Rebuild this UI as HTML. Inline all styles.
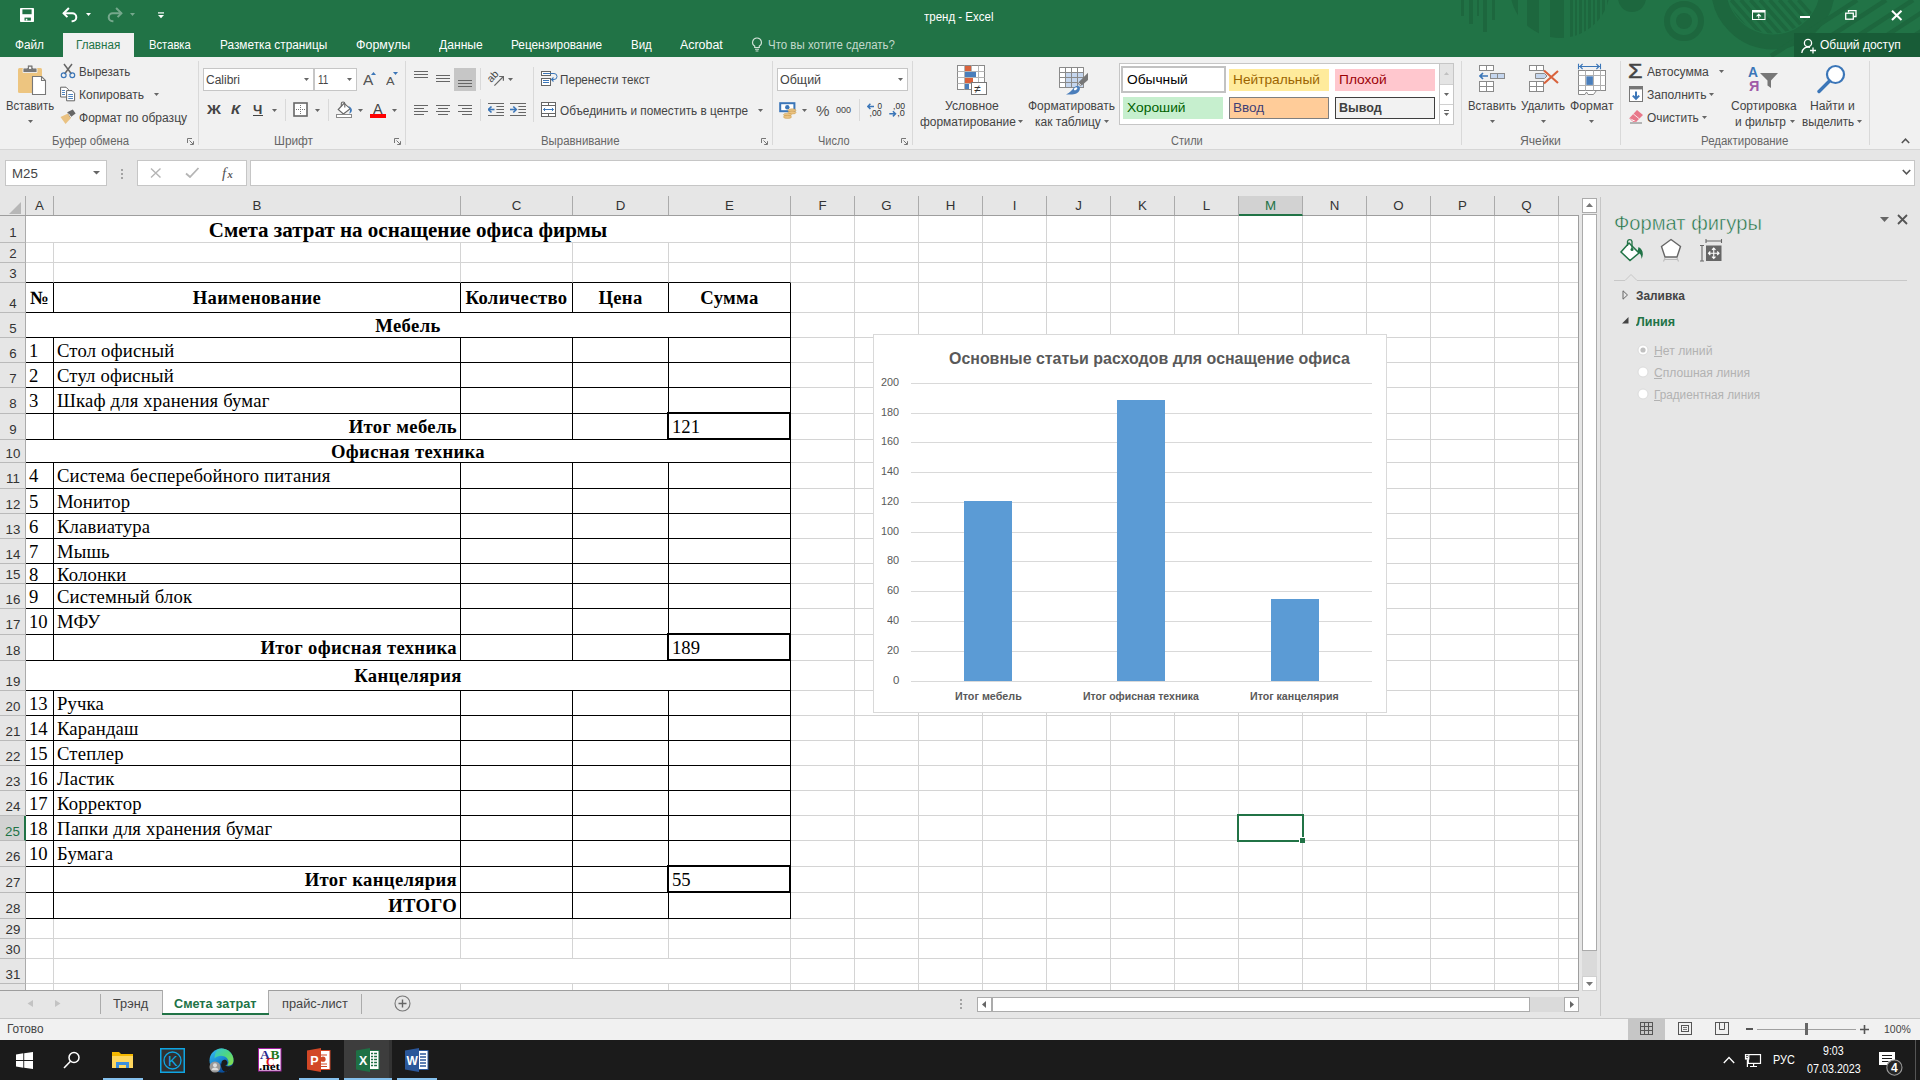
<!DOCTYPE html>
<html lang="ru">
<head>
<meta charset="utf-8">
<title>тренд - Excel</title>
<style>
*{box-sizing:border-box;margin:0;padding:0}
html,body{width:1920px;height:1080px;overflow:hidden;background:#e6e6e6}
body{font-family:"Liberation Sans",sans-serif;font-size:12px;color:#444;position:relative;-webkit-font-smoothing:antialiased}
.abs{position:absolute}
.t{position:absolute;white-space:nowrap;line-height:1}
/* title bar */
#titlebar{position:absolute;left:0;top:0;width:1920px;height:57px;background:#217346;overflow:hidden}
#ribbon{position:absolute;left:0;top:57px;width:1920px;height:93px;background:#f1f1f1;border-bottom:1px solid #d2d2d2}
#fbar{position:absolute;left:0;top:150px;width:1920px;height:47px;background:#e6e6e6}
#grid{position:absolute;left:0;top:196px;width:1579px;height:795px;background:#fff;overflow:hidden}
#pane{position:absolute;left:1600px;top:197px;width:320px;height:821px;background:#e6e6e6}
#tabs{position:absolute;left:0;top:990px;width:1600px;height:28px;background:#e6e6e6}
#status{position:absolute;left:0;top:1018px;width:1920px;height:22px;background:#f1f1f1;border-top:1px solid #d2d2d2}
#taskbar{position:absolute;left:0;top:1040px;width:1920px;height:40px;background:#1b1b1b}
/* grid */
.c{position:absolute;border-right:1px solid #d4d4d4;border-bottom:1px solid #d4d4d4;background:#fff;font-family:"Liberation Serif",serif;font-size:18.67px;color:#000;white-space:nowrap;overflow:visible}
.c span{position:absolute;bottom:1px;line-height:21px}
.ch{position:absolute;top:0;height:19px;background:#e6e6e6;border-right:1px solid #ababab;text-align:center;font-size:13.3px;line-height:20px;color:#333}
.rh{position:absolute;left:0;width:26px;background:#e6e6e6;border-bottom:1px solid #bababa;border-right:1px solid #ababab;text-align:center;font-size:13.3px;color:#333}
.rh span{position:absolute;left:1px;right:0;bottom:0;line-height:17px}
.bl{position:absolute;background:#000}
</style>
</head>
<body>
<div id="titlebar">
<svg class="abs" style="left:1440px;top:0" width="480" height="57" viewBox="0 0 480 57">
<g fill="#1d673e">
<rect x="21" y="0" width="3" height="16"/><rect x="29" y="0" width="4" height="24"/><rect x="37" y="0" width="2" height="16"/><rect x="43" y="0" width="4" height="32"/><rect x="52" y="0" width="3" height="20"/>
<clipPath id="hc"><circle cx="120" cy="-12" r="50"/></clipPath>
<g clip-path="url(#hc)">
<rect x="68" y="0" width="10" height="40"/><rect x="87" y="0" width="12" height="40"/><rect x="110" y="0" width="14" height="40"/>
<rect x="130" y="0" width="3" height="40"/><rect x="135" y="0" width="2" height="40"/><rect x="139" y="0" width="3" height="40"/><rect x="144" y="0" width="2" height="40"/><rect x="148" y="0" width="3" height="40"/><rect x="153" y="0" width="2" height="40"/><rect x="157" y="0" width="3" height="40"/><rect x="162" y="0" width="3" height="40"/><rect x="167" y="0" width="3" height="40"/>
</g>
<circle cx="192" cy="-2" r="14"/>
<circle cx="244" cy="21" r="8"/>
</g>
<circle cx="244" cy="21" r="17" fill="none" stroke="#1d673e" stroke-width="6"/>
<circle cx="333" cy="-12.6" r="54.5" fill="none" stroke="#1d673e" stroke-width="15"/>
<clipPath id="rc"><circle cx="333" cy="-12.6" r="46"/></clipPath>
<g stroke="#1d673e" stroke-width="3.7" fill="none">
<g clip-path="url(#rc)"><line x1="262.5" y1="0" x2="320.5" y2="66"/><line x1="272.1" y1="0" x2="330.1" y2="66"/><line x1="281.7" y1="0" x2="339.7" y2="66"/><line x1="291.3" y1="0" x2="349.3" y2="66"/><line x1="300.9" y1="0" x2="358.9" y2="66"/><line x1="310.5" y1="0" x2="368.5" y2="66"/><line x1="320.1" y1="0" x2="378.1" y2="66"/><line x1="329.7" y1="0" x2="387.7" y2="66"/><line x1="339.3" y1="0" x2="397.3" y2="66"/><line x1="348.9" y1="0" x2="406.9" y2="66"/><line x1="358.5" y1="0" x2="416.5" y2="66"/></g>
<g stroke-width="4.5"><line x1="417" y1="0" x2="331" y2="56"/><line x1="446" y1="0" x2="360" y2="56"/><line x1="473" y1="0" x2="387" y2="56"/><line x1="501" y1="0" x2="415" y2="56"/><line x1="529" y1="0" x2="443" y2="56"/></g>
</g>
</svg>
<div class="abs" style="left:1794.00px;top:33.00px;width:126.00px;height:24.00px;background:#185c37;"></div>
<svg class="abs" style="left:20.00px;top:8.00px" width="14" height="14" viewBox="0 0 14 14"><rect x="0" y="0" width="14" height="14" rx=".8" fill="#fff"/><rect x="2.4" y="1.4" width="9.2" height="4.8" fill="#217346"/><rect x="4.5" y="9.6" width="6.4" height="3" fill="#217346"/><rect x="5.8" y="10.8" width="1.5" height="1.8" fill="#fff"/></svg>
<svg class="abs" style="left:62.00px;top:7.00px" width="17" height="16" viewBox="0 0 17 16"><path d="M1.6,6.3 H10.3 A4,4 0 0 1 10.3,14.3 H9.6" fill="none" stroke="#fff" stroke-width="2"/><path d="M6.9,1 L1.6,6.3 L5.4,10.1" fill="none" stroke="#fff" stroke-width="2"/></svg>
<svg class="abs" style="left:86.00px;top:13.00px" width="5" height="3" viewBox="0 0 5 3"><polygon points="0,0 5,0 2.5,3" fill="#fff"/></svg>
<svg class="abs" style="left:106.00px;top:7.00px" width="17" height="16" viewBox="0 0 17 16"><g opacity=".38"><path d="M15.4,6.3 H6.7 A4,4 0 0 0 6.7,14.3 H7.4" fill="none" stroke="#fff" stroke-width="2"/><path d="M10.1,1 L15.4,6.3 L11.6,10.1" fill="none" stroke="#fff" stroke-width="2"/></g></svg>
<svg class="abs" style="left:130.00px;top:13.00px" width="5" height="3" viewBox="0 0 5 3"><polygon points="0,0 5,0 2.5,3" fill="#fff" opacity=".38"/></svg>
<svg class="abs" style="left:157.50px;top:12.00px" width="6" height="7" viewBox="0 0 6 7"><rect x="0" y=".3" width="6" height="1.2" fill="#fff"/><polygon points="0,3 6,3 3,6.2" fill="#fff"/></svg>
<span class="t" style="left:923.90px;top:11px;font-size:12.30px;color:#fff;transform-origin:0 0;transform:scaleX(0.9355);">тренд - Excel</span>
<svg class="abs" style="left:1752.00px;top:10.00px" width="14" height="10" viewBox="0 0 14 10"><rect x=".5" y=".5" width="12.5" height="9" fill="none" stroke="#fff"/><rect x=".5" y=".5" width="12.5" height="2" fill="#fff"/><path d="M6.75,8.5 V4.5 M4.6,6.3 L6.75,4.2 L8.9,6.3" stroke="#fff" fill="none" stroke-width="1.1"/></svg>
<div class="abs" style="left:1800.00px;top:16.00px;width:10.00px;height:2.00px;background:#fff;"></div>
<svg class="abs" style="left:1845.00px;top:10.00px" width="12" height="10" viewBox="0 0 12 10"><path d="M3.5,2.5 V.5 H11 V6.5 H8.5" fill="none" stroke="#fff" stroke-width="1.3"/><rect x=".7" y="3.2" width="7.6" height="6" fill="none" stroke="#fff" stroke-width="1.3"/></svg>
<svg class="abs" style="left:1891.00px;top:10.00px" width="12" height="11" viewBox="0 0 12 11"><path d="M1,.8 L10.5,10 M10.5,.8 L1,10" stroke="#fff" stroke-width="2"/></svg>
<div class="abs" style="left:63.00px;top:33.00px;width:71.00px;height:24.00px;background:#f1f1f1;"></div>
<span class="t" style="left:15.10px;top:39px;font-size:12.30px;color:#fff;transform-origin:0 0;transform:scaleX(0.9590);">Файл</span>
<span class="t" style="left:75.90px;top:39px;font-size:12.30px;color:#217346;transform-origin:0 0;transform:scaleX(0.9441);">Главная</span>
<span class="t" style="left:149.10px;top:39px;font-size:12.30px;color:#fff;transform-origin:0 0;transform:scaleX(0.9143);">Вставка</span>
<span class="t" style="left:219.90px;top:39px;font-size:12.30px;color:#fff;transform-origin:0 0;transform:scaleX(0.9607);">Разметка страницы</span>
<span class="t" style="left:355.90px;top:39px;font-size:12.30px;color:#fff;transform-origin:0 0;transform:scaleX(1.0126);">Формулы</span>
<span class="t" style="left:438.80px;top:39px;font-size:12.30px;color:#fff;transform-origin:0 0;transform:scaleX(0.9856);">Данные</span>
<span class="t" style="left:511.30px;top:39px;font-size:12.30px;color:#fff;transform-origin:0 0;transform:scaleX(0.9592);">Рецензирование</span>
<span class="t" style="left:630.90px;top:39px;font-size:12.30px;color:#fff;transform-origin:0 0;transform:scaleX(0.9347);">Вид</span>
<span class="t" style="left:679.60px;top:39px;font-size:12.30px;color:#fff;transform-origin:0 0;transform:scaleX(1.0097);">Acrobat</span>
<svg class="abs" style="left:751.00px;top:37.00px" width="12" height="15" viewBox="0 0 12 15"><path d="M6,1 A4.3,4.3 0 0 1 8.3,9 V10.5 H3.7 V9 A4.3,4.3 0 0 1 6,1 Z" fill="none" stroke="#cfe1d6" stroke-width="1.2"/><path d="M4,12.3 H8 M4.6,14 H7.4" stroke="#cfe1d6" stroke-width="1.1"/></svg>
<span class="t" style="left:768.40px;top:39px;font-size:12.30px;color:#c3dacc;transform-origin:0 0;transform:scaleX(0.9340);">Что вы хотите сделать?</span>
<svg class="abs" style="left:1801.00px;top:38.00px" width="16" height="16" viewBox="0 0 16 16"><circle cx="7" cy="5" r="3.6" fill="none" stroke="#fff" stroke-width="1.3"/><path d="M.8,15 A6.3,6.3 0 0 1 9,9.3" fill="none" stroke="#fff" stroke-width="1.3"/><path d="M12,9.5 V15.5 M9,12.5 H15" stroke="#fff" stroke-width="1.3"/></svg>
<span class="t" style="left:1820.10px;top:39px;font-size:12.30px;color:#fff;transform-origin:0 0;transform:scaleX(0.9777);">Общий доступ</span>
</div>
<div class="abs" style="left:0;top:57px;width:1920px;height:92px;background:#f1f1f1"></div>
<div class="abs" style="left:0;top:149px;width:1920px;height:1px;background:#d6d6d6"></div>
<svg class="abs" style="left:17.00px;top:64.00px" width="30" height="32" viewBox="0 0 30 32"><rect x="1" y="4" width="24" height="25" rx="1.5" fill="#edc580"/><path d="M6,8.5 V5 Q6,4 7,4 H10.3 V2 Q10.3,1 11.3,1 H15 Q16,1 16,2 V4 H19 Q20,4 20,5 V8.5 Z" fill="#777" stroke="#f1f1f1" stroke-width=".9"/><rect x="12" y="2.8" width="2.2" height="2.2" fill="#f1f1f1"/><path d="M15.5,12.5 H24.5 L28.5,16.5 V30.5 H15.5 Z" fill="#fff" stroke="#777" stroke-width="1.1"/><path d="M24.5,12.5 V16.5 H28.5" fill="none" stroke="#777" stroke-width="1.1"/></svg>
<span class="t" style="left:6.10px;top:100px;font-size:12.30px;color:#444;transform-origin:0 0;transform:scaleX(0.9216);">Вставить</span>
<svg class="abs" style="left:28.00px;top:120.00px" width="5" height="3" viewBox="0 0 5 3"><polygon points="0,0 5,0 2.5,3" fill="#666"/></svg>
<svg class="abs" style="left:60.00px;top:63.00px" width="16" height="16" viewBox="0 0 16 16"><path d="M4,1 L11.5,11 M12,1 L4.5,11" stroke="#666" stroke-width="1.5" fill="none"/><circle cx="3.7" cy="12.3" r="2.4" fill="none" stroke="#3b76b8" stroke-width="1.2"/><circle cx="12.3" cy="12.3" r="2.4" fill="none" stroke="#3b76b8" stroke-width="1.2"/></svg>
<span class="t" style="left:79.20px;top:66px;font-size:12.30px;color:#444;transform-origin:0 0;transform:scaleX(0.9358);">Вырезать</span>
<svg class="abs" style="left:60.00px;top:86.00px" width="16" height="16" viewBox="0 0 16 16"><path d="M.6,1.2 H6 L8.5,3.7 V11 H.6 Z" fill="#fff" stroke="#666" stroke-width="1"/><path d="M6.6,4.6 H12 L14.6,7.2 V14.8 H6.6 Z" fill="#fff" stroke="#666" stroke-width="1"/><path d="M2,4.5 H5 M2,6.5 H5 M2,8.5 H5 M8.3,8.5 H13 M8.3,10.5 H13 M8.3,12.5 H13" stroke="#3b76b8" stroke-width=".9"/></svg>
<span class="t" style="left:79.20px;top:89px;font-size:12.30px;color:#444;transform-origin:0 0;transform:scaleX(0.9807);">Копировать</span>
<svg class="abs" style="left:154.00px;top:93.00px" width="5" height="3" viewBox="0 0 5 3"><polygon points="0,0 5,0 2.5,3" fill="#666"/></svg>
<svg class="abs" style="left:60.00px;top:109.00px" width="17" height="16" viewBox="0 0 17 16"><path d="M0.5,8 L8,4.5 L11,9 L5.5,15 Z" fill="#eac282"/><path d="M7.2,3.2 L12.8,0.6 L15.6,4.4 L10.2,8.6 Z" fill="#666"/><path d="M8.5,4.6 L10.8,8" stroke="#f1f1f1" stroke-width="1"/></svg>
<span class="t" style="left:79.20px;top:112px;font-size:12.30px;color:#444;transform-origin:0 0;transform:scaleX(0.9801);">Формат по образцу</span>
<span class="t" style="left:52.10px;top:135px;font-size:12.30px;color:#666;transform-origin:0 0;transform:scaleX(0.9219);">Буфер обмена</span>
<svg class="abs" style="left:187.00px;top:138.00px" width="7" height="7" viewBox="0 0 7 7"><path d="M.5,5 V.5 H5" fill="none" stroke="#777" stroke-width="1"/><path d="M2.5,2.5 L6,6 M6.5,3.2 V6.5 H3.2" fill="none" stroke="#777" stroke-width="1"/></svg>
<div class="abs" style="left:198.00px;top:61.00px;width:1.00px;height:84.00px;background:#d9d9d9;"></div>
<div class="abs" style="left:203.00px;top:68.00px;width:111.00px;height:23.00px;background:#fff;border:1px solid #c6c6c6;"></div>
<div class="abs" style="left:314.00px;top:68.00px;width:43.00px;height:23.00px;background:#fff;border:1px solid #c6c6c6;border-left:1px solid #c6c6c6;"></div>
<span class="t" style="left:206.10px;top:74px;font-size:12.30px;color:#444;transform-origin:0 0;transform:scaleX(0.9768);">Calibri</span>
<svg class="abs" style="left:304.00px;top:78.00px" width="5" height="3" viewBox="0 0 5 3"><polygon points="0,0 5,0 2.5,3" fill="#666"/></svg>
<span class="t" style="left:317.60px;top:74px;font-size:12.30px;color:#444;transform-origin:0 0;transform:scaleX(0.8066);">11</span>
<svg class="abs" style="left:347.00px;top:78.00px" width="5" height="3" viewBox="0 0 5 3"><polygon points="0,0 5,0 2.5,3" fill="#666"/></svg>
<span class="t" style="left:362.60px;top:73px;font-size:14.30px;color:#555;transform-origin:0 0;transform:scaleX(1.0798);">A</span>
<svg class="abs" style="left:370.50px;top:72.00px" width="5" height="3" viewBox="0 0 5 3"><polygon points="0,3 5,3 2.5,0" fill="#3b76b8"/></svg>
<span class="t" style="left:385.60px;top:76px;font-size:11.40px;color:#555;transform-origin:0 0;transform:scaleX(1.1244);">A</span>
<svg class="abs" style="left:393.00px;top:72.00px" width="5" height="3" viewBox="0 0 5 3"><polygon points="0,0 5,0 2.5,3" fill="#3b76b8"/></svg>
<span class="t" style="left:207.10px;top:103px;font-size:13.00px;color:#444;font-weight:bold;transform-origin:0 0;transform:scaleX(1.1830);">Ж</span>
<span class="t" style="left:230.60px;top:103px;font-size:13.00px;color:#444;font-weight:bold;font-style:italic;transform-origin:0 0;transform:scaleX(1.1512);">К</span>
<span class="t" style="left:253.10px;top:103px;font-size:13.00px;color:#444;font-weight:bold;transform-origin:0 0;transform:scaleX(1.0181);">Ч</span>
<div class="abs" style="left:253.00px;top:115.00px;width:10.00px;height:1.20px;background:#444;"></div>
<svg class="abs" style="left:272.00px;top:109.00px" width="5" height="3" viewBox="0 0 5 3"><polygon points="0,0 5,0 2.5,3" fill="#666"/></svg>
<div class="abs" style="left:285.00px;top:99.00px;width:1.00px;height:22.00px;background:#d9d9d9;"></div>
<svg class="abs" style="left:293.00px;top:102.00px" width="15" height="15" viewBox="0 0 15 15"><rect x="1" y="1" width="13" height="13" fill="#fff" stroke="#666" stroke-width="1.6"/><path d="M7.5,3 V12 M3,7.5 H12" stroke="#777" stroke-width="1" stroke-dasharray="1,1"/></svg>
<svg class="abs" style="left:315.00px;top:109.00px" width="5" height="3" viewBox="0 0 5 3"><polygon points="0,0 5,0 2.5,3" fill="#666"/></svg>
<div class="abs" style="left:328.00px;top:99.00px;width:1.00px;height:22.00px;background:#d9d9d9;"></div>
<svg class="abs" style="left:336.00px;top:101.00px" width="17" height="18" viewBox="0 0 17 18"><path d="M8.1,2.3 L14.2,7.7 L7.4,13 L2.2,8.5 Z" fill="#fff" stroke="#666" stroke-width="1.1"/><path d="M5.3,5.3 V2.6 A1.75,1.6 0 0 1 8.8,2.6 V6.6" fill="none" stroke="#666" stroke-width="1.1"/><path d="M12.2,5 C15.2,6 16.6,8.6 15.6,10.6 C15,12 13.7,12.6 13.3,12.3 C13.9,10.8 14.1,9 14.2,7.7 Z" fill="#3b76b8"/><rect x=".5" y="13.5" width="15" height="3" fill="#fff" stroke="#8a8a8a" stroke-width="1"/></svg>
<svg class="abs" style="left:358.00px;top:109.00px" width="5" height="3" viewBox="0 0 5 3"><polygon points="0,0 5,0 2.5,3" fill="#666"/></svg>
<span class="t" style="left:373.35px;top:102px;font-size:14.00px;color:#444;transform-origin:0 0;transform:scaleX(1.0227);">A</span>
<div class="abs" style="left:370.00px;top:114.00px;width:16.00px;height:4.00px;background:#f00;"></div>
<svg class="abs" style="left:392.00px;top:109.00px" width="5" height="3" viewBox="0 0 5 3"><polygon points="0,0 5,0 2.5,3" fill="#666"/></svg>
<span class="t" style="left:274.35px;top:135px;font-size:12.30px;color:#666;transform-origin:0 0;transform:scaleX(0.9650);">Шрифт</span>
<svg class="abs" style="left:394.00px;top:138.00px" width="7" height="7" viewBox="0 0 7 7"><path d="M.5,5 V.5 H5" fill="none" stroke="#777" stroke-width="1"/><path d="M2.5,2.5 L6,6 M6.5,3.2 V6.5 H3.2" fill="none" stroke="#777" stroke-width="1"/></svg>
<div class="abs" style="left:405.00px;top:61.00px;width:1.00px;height:84.00px;background:#d9d9d9;"></div>
<div class="abs" style="left:414.00px;top:71.00px;width:14.00px;height:1.00px;background:#666;"></div>
<div class="abs" style="left:414.00px;top:74.00px;width:14.00px;height:1.00px;background:#666;"></div>
<div class="abs" style="left:414.00px;top:77.00px;width:14.00px;height:1.00px;background:#666;"></div>
<div class="abs" style="left:436.00px;top:75.00px;width:14.00px;height:1.00px;background:#666;"></div>
<div class="abs" style="left:436.00px;top:78.00px;width:14.00px;height:1.00px;background:#666;"></div>
<div class="abs" style="left:436.00px;top:81.00px;width:14.00px;height:1.00px;background:#666;"></div>
<div class="abs" style="left:454.00px;top:68.00px;width:22.00px;height:23.00px;background:#c6c6c6;"></div>
<div class="abs" style="left:458.00px;top:80.00px;width:14.00px;height:1.00px;background:#666;"></div>
<div class="abs" style="left:458.00px;top:83.00px;width:14.00px;height:1.00px;background:#666;"></div>
<div class="abs" style="left:458.00px;top:86.00px;width:14.00px;height:1.00px;background:#666;"></div>
<div class="abs" style="left:480.00px;top:68.00px;width:1.00px;height:22.00px;background:#d9d9d9;"></div>
<svg class="abs" style="left:487.00px;top:69.00px" width="18" height="18" viewBox="0 0 18 18"><path d="M7.4,16.6 L15.9,8" stroke="#666" stroke-width="1.2"/><path d="M12.2,7.5 L16.4,7.5 L16.4,11.7" fill="none" stroke="#666" stroke-width="1.2"/><text x="0" y="0" font-size="10.5" font-family="Liberation Sans,sans-serif" fill="#444" transform="translate(4.2,14) rotate(-47)">ab</text></svg>
<svg class="abs" style="left:508.00px;top:78.00px" width="5" height="3" viewBox="0 0 5 3"><polygon points="0,0 5,0 2.5,3" fill="#666"/></svg>
<div class="abs" style="left:533.00px;top:67.00px;width:1.00px;height:55.00px;background:#d9d9d9;"></div>
<svg class="abs" style="left:541.00px;top:70.00px" width="17" height="17" viewBox="0 0 17 17"><rect x=".5" y="1.5" width="9" height="4" fill="#fff" stroke="#666"/><rect x=".5" y="8.5" width="9" height="7" fill="#fff" stroke="#666"/><path d="M2,3.5 H13 A3,3 0 0 1 13,9.5 H10.8 M2,10.5 H8 M2,12.5 H8" fill="none" stroke="#3b76b8" stroke-width="1"/><path d="M12.5,7.5 L10.5,9.5 L12.5,11.5" fill="none" stroke="#3b76b8" stroke-width="1.1"/></svg>
<span class="t" style="left:560.20px;top:74px;font-size:12.30px;color:#444;transform-origin:0 0;transform:scaleX(0.9492);">Перенести текст</span>
<div class="abs" style="left:414.00px;top:105.00px;width:14.00px;height:1.00px;background:#666;"></div>
<div class="abs" style="left:414.00px;top:108.00px;width:10.00px;height:1.00px;background:#666;"></div>
<div class="abs" style="left:414.00px;top:111.00px;width:14.00px;height:1.00px;background:#666;"></div>
<div class="abs" style="left:414.00px;top:114.00px;width:10.00px;height:1.00px;background:#666;"></div>
<div class="abs" style="left:436.00px;top:105.00px;width:14.00px;height:1.00px;background:#666;"></div>
<div class="abs" style="left:438.00px;top:108.00px;width:10.00px;height:1.00px;background:#666;"></div>
<div class="abs" style="left:436.00px;top:111.00px;width:14.00px;height:1.00px;background:#666;"></div>
<div class="abs" style="left:438.00px;top:114.00px;width:10.00px;height:1.00px;background:#666;"></div>
<div class="abs" style="left:458.00px;top:105.00px;width:14.00px;height:1.00px;background:#666;"></div>
<div class="abs" style="left:462.00px;top:108.00px;width:10.00px;height:1.00px;background:#666;"></div>
<div class="abs" style="left:458.00px;top:111.00px;width:14.00px;height:1.00px;background:#666;"></div>
<div class="abs" style="left:462.00px;top:114.00px;width:10.00px;height:1.00px;background:#666;"></div>
<div class="abs" style="left:480.00px;top:99.00px;width:1.00px;height:22.00px;background:#d9d9d9;"></div>
<svg class="abs" style="left:488.00px;top:103.00px" width="16" height="14" viewBox="0 0 16 14"><path d="M0,.5 H16 M8.4,3.5 H16 M8.4,6.5 H16 M8.4,9.5 H16 M0,12.5 H16" stroke="#666" stroke-width="1"/><path d="M.5,6.5 H6.5" stroke="#3b76b8" stroke-width="1.6"/><path d="M3.5,3.5 L.5,6.5 L3.5,9.5" fill="none" stroke="#3b76b8" stroke-width="1.6"/></svg>
<svg class="abs" style="left:510.00px;top:103.00px" width="16" height="14" viewBox="0 0 16 14"><path d="M0,.5 H16 M8.4,3.5 H16 M8.4,6.5 H16 M8.4,9.5 H16 M0,12.5 H16" stroke="#666" stroke-width="1"/><path d="M0,6.5 H6" stroke="#3b76b8" stroke-width="1.6"/><path d="M3.3,3.5 L6.3,6.5 L3.3,9.5" fill="none" stroke="#3b76b8" stroke-width="1.6"/></svg>
<svg class="abs" style="left:541.00px;top:102.00px" width="16" height="16" viewBox="0 0 16 16"><rect x=".5" y=".5" width="14" height="14" fill="#fff" stroke="#666"/><path d="M.5,3.5 H14.5 M.5,11.5 H14.5 M7.5,.5 V3.5 M7.5,11.5 V14.5" stroke="#666"/><path d="M2.5,7.5 H12.5 M4.1,5.9 L2.5,7.5 L4.1,9.1 M10.9,5.9 L12.5,7.5 L10.9,9.1" fill="none" stroke="#3b76b8" stroke-width="1"/></svg>
<span class="t" style="left:560.20px;top:105px;font-size:12.30px;color:#444;transform-origin:0 0;transform:scaleX(0.9571);">Объединить и поместить в центре</span>
<svg class="abs" style="left:758.00px;top:109.00px" width="5" height="3" viewBox="0 0 5 3"><polygon points="0,0 5,0 2.5,3" fill="#666"/></svg>
<span class="t" style="left:541.20px;top:135px;font-size:12.30px;color:#666;transform-origin:0 0;transform:scaleX(0.9284);">Выравнивание</span>
<svg class="abs" style="left:761.00px;top:138.00px" width="7" height="7" viewBox="0 0 7 7"><path d="M.5,5 V.5 H5" fill="none" stroke="#777" stroke-width="1"/><path d="M2.5,2.5 L6,6 M6.5,3.2 V6.5 H3.2" fill="none" stroke="#777" stroke-width="1"/></svg>
<div class="abs" style="left:772.00px;top:61.00px;width:1.00px;height:84.00px;background:#d9d9d9;"></div>
<div class="abs" style="left:777.00px;top:68.00px;width:131.00px;height:23.00px;background:#fff;border:1px solid #c6c6c6;"></div>
<span class="t" style="left:780.10px;top:74px;font-size:12.30px;color:#444;transform-origin:0 0;transform:scaleX(1.0155);">Общий</span>
<svg class="abs" style="left:898.00px;top:78.00px" width="5" height="3" viewBox="0 0 5 3"><polygon points="0,0 5,0 2.5,3" fill="#666"/></svg>
<svg class="abs" style="left:779.00px;top:102.00px" width="18" height="17" viewBox="0 0 18 17"><rect x="1.2" y="1.2" width="14.2" height="8" fill="#fff" stroke="#3b76b8" stroke-width="2"/><circle cx="8.3" cy="5.2" r="2.2" fill="#3b76b8"/><path d="M.8,9.3 L5,5 M15.3,.8 L11,5" stroke="#3b76b8" stroke-width="0"/><g fill="#eac282" stroke="#c89b4b" stroke-width=".5"><ellipse cx="13" cy="8.3" rx="4" ry="1.5"/><ellipse cx="13" cy="10.5" rx="4" ry="1.5"/><ellipse cx="8.5" cy="12.7" rx="4" ry="1.5"/><ellipse cx="8.5" cy="14.9" rx="4" ry="1.5"/></g></svg>
<svg class="abs" style="left:802.00px;top:109.00px" width="5" height="3" viewBox="0 0 5 3"><polygon points="0,0 5,0 2.5,3" fill="#666"/></svg>
<span class="t" style="left:815.60px;top:103px;font-size:15.50px;color:#555;transform-origin:0 0;transform:scaleX(0.9796);">%</span>
<span class="t" style="left:836.30px;top:105px;font-size:9.70px;color:#444;transform-origin:0 0;transform:scaleX(0.9330);">000</span>
<div class="abs" style="left:859.00px;top:99.00px;width:1.00px;height:22.00px;background:#d9d9d9;"></div>
<svg class="abs" style="left:866.50px;top:103.00px" width="17" height="15" viewBox="0 0 17 15"><path d="M.8,3.4 H7 M3.4,.8 L.8,3.4 L3.4,6" fill="none" stroke="#3b76b8" stroke-width="1.5"/><text x="10.6" y="5.6" font-size="8.2" fill="#333" font-family="Liberation Sans,sans-serif">0</text><text x="2.6" y="13.4" font-size="8.2" fill="#333" font-family="Liberation Sans,sans-serif" textLength="12" lengthAdjust="spacingAndGlyphs">,00</text></svg>
<svg class="abs" style="left:888.50px;top:103.00px" width="17" height="15" viewBox="0 0 17 15"><text x="4" y="5.6" font-size="8.2" fill="#333" font-family="Liberation Sans,sans-serif" textLength="12" lengthAdjust="spacingAndGlyphs">,00</text><path d="M.3,10.8 H6.5 M3.9,8.2 L6.5,10.8 L3.9,13.4" fill="none" stroke="#3b76b8" stroke-width="1.5"/><text x="8.2" y="13.4" font-size="8.2" fill="#333" font-family="Liberation Sans,sans-serif" textLength="7.6" lengthAdjust="spacingAndGlyphs">,0</text></svg>
<span class="t" style="left:818.40px;top:135px;font-size:12.30px;color:#666;transform-origin:0 0;transform:scaleX(0.8905);">Число</span>
<svg class="abs" style="left:901.00px;top:138.00px" width="7" height="7" viewBox="0 0 7 7"><path d="M.5,5 V.5 H5" fill="none" stroke="#777" stroke-width="1"/><path d="M2.5,2.5 L6,6 M6.5,3.2 V6.5 H3.2" fill="none" stroke="#777" stroke-width="1"/></svg>
<div class="abs" style="left:912.00px;top:61.00px;width:1.00px;height:84.00px;background:#d9d9d9;"></div>
<svg class="abs" style="left:957.00px;top:65.00px" width="30" height="30" viewBox="0 0 30 30"><rect x=".5" y=".5" width="27" height="24" fill="#fff" stroke="#8a8a8a"/><path d="M7.5,.5 V24.5 M14.5,.5 V24.5 M21.5,.5 V24.5 M.5,6.5 H27.5 M.5,12.5 H27.5 M.5,18.5 H27.5" stroke="#b5b5b5" stroke-width="1"/><rect x="8" y="1" width="6" height="5" fill="#d9623c"/><rect x="8" y="7" width="11" height="5" fill="#4a7ebb"/><rect x="8" y="13" width="8" height="5" fill="#d9623c"/><rect x="8" y="19" width="4" height="5" fill="#4a7ebb"/><rect x="14.5" y="17.5" width="15" height="12" fill="#fff" stroke="#777"/><text x="17.3" y="28" font-size="12" font-family="Liberation Sans,sans-serif" fill="#333">≠</text></svg>
<span class="t" style="left:944.60px;top:100px;font-size:12.30px;color:#444;transform-origin:0 0;transform:scaleX(0.9907);">Условное</span>
<span class="t" style="left:919.60px;top:116px;font-size:12.30px;color:#444;transform-origin:0 0;transform:scaleX(0.9701);">форматирование</span>
<svg class="abs" style="left:1018.00px;top:120.00px" width="5" height="3" viewBox="0 0 5 3"><polygon points="0,0 5,0 2.5,3" fill="#666"/></svg>
<svg class="abs" style="left:1058.00px;top:66.00px" width="31" height="30" viewBox="0 0 31 30"><rect x="1.5" y="1.5" width="24" height="20" fill="#c5d6ee" stroke="#8a8a8a"/><rect x="1.5" y="1.5" width="24" height="5" fill="#fff" stroke="none"/><rect x="1.5" y="1.5" width="6" height="20" fill="#fff" stroke="none"/><path d="M1.5,1.5 H25.5 V21.5 H1.5 Z M7.5,1.5 V21.5 M13.5,1.5 V21.5 M19.5,1.5 V21.5 M1.5,6.5 H25.5 M1.5,11.5 H25.5 M1.5,16.5 H25.5" fill="none" stroke="#8a8a8a" stroke-width="1"/><path d="M30,6.8 V14 L22.8,20.3 L19.6,17.3 Z" fill="#777"/><path d="M20.3,16.6 L23.5,19.7" stroke="#f1f1f1" stroke-width="1"/><path d="M21.6,21 C22.6,23.5 21,27 17,28 C14,28.7 10.5,28.7 8,28.4 C12,27 14,24 16,21.5 C17.5,19.6 20.6,19.3 21.6,21 Z" fill="#4a7ebb"/><ellipse cx="17.6" cy="22.8" rx="1.9" ry="1.2" fill="#fff" transform="rotate(-35 17.6 22.8)"/></svg>
<span class="t" style="left:1027.90px;top:100px;font-size:12.30px;color:#444;transform-origin:0 0;transform:scaleX(0.9747);">Форматировать</span>
<span class="t" style="left:1035.40px;top:116px;font-size:12.30px;color:#444;transform-origin:0 0;transform:scaleX(0.9768);">как таблицу</span>
<svg class="abs" style="left:1104.00px;top:120.00px" width="5" height="3" viewBox="0 0 5 3"><polygon points="0,0 5,0 2.5,3" fill="#666"/></svg>
<div class="abs" style="left:1119.00px;top:63.00px;width:335.00px;height:62.00px;background:#fff;border:1px solid #c6c6c6;"></div>
<div class="abs" style="left:1439.00px;top:63.00px;width:1.00px;height:62.00px;background:#c6c6c6;"></div>
<div class="abs" style="left:1440.00px;top:64.00px;width:13.00px;height:20.00px;background:#e4e4e4;"></div>
<div class="abs" style="left:1440.00px;top:84.00px;width:13.00px;height:1.00px;background:#d0d0d0;"></div>
<div class="abs" style="left:1440.00px;top:104.00px;width:13.00px;height:1.00px;background:#d0d0d0;"></div>
<svg class="abs" style="left:1444.00px;top:72.00px" width="5" height="3" viewBox="0 0 5 3"><polygon points="0,3 5,3 2.5,0" fill="#c0c0c0"/></svg>
<svg class="abs" style="left:1444.00px;top:93.00px" width="5" height="3" viewBox="0 0 5 3"><polygon points="0,0 5,0 2.5,3" fill="#666"/></svg>
<div class="abs" style="left:1444.00px;top:110.00px;width:5.00px;height:1.00px;background:#666;"></div>
<svg class="abs" style="left:1444.00px;top:113.00px" width="5" height="3" viewBox="0 0 5 3"><polygon points="0,0 5,0 2.5,3" fill="#666"/></svg>
<div class="abs" style="left:1121.00px;top:66.00px;width:105.00px;height:27.00px;background:#fff;border:2px solid #c2c2c2;"></div>
<span class="t" style="left:1127.10px;top:73px;font-size:13.30px;color:#000;transform-origin:0 0;transform:scaleX(1.0343);">Обычный</span>
<div class="abs" style="left:1229.00px;top:69.00px;width:100.00px;height:22.00px;background:#ffeb9c;"></div>
<span class="t" style="left:1233.20px;top:73px;font-size:13.30px;color:#9c6500;transform-origin:0 0;transform:scaleX(1.0303);">Нейтральный</span>
<div class="abs" style="left:1335.00px;top:69.00px;width:100.00px;height:22.00px;background:#ffc7ce;"></div>
<span class="t" style="left:1339.10px;top:73px;font-size:13.30px;color:#9c0006;transform-origin:0 0;transform:scaleX(1.0360);">Плохой</span>
<div class="abs" style="left:1123.00px;top:97.00px;width:100.00px;height:22.00px;background:#c6efce;"></div>
<span class="t" style="left:1127.10px;top:101px;font-size:13.30px;color:#006100;transform-origin:0 0;transform:scaleX(1.0382);">Хороший</span>
<div class="abs" style="left:1229.00px;top:97.00px;width:100.00px;height:22.00px;background:#ffcc99;border:1px solid #7f7f7f;"></div>
<span class="t" style="left:1233.20px;top:101px;font-size:13.30px;color:#3f3f76;transform-origin:0 0;transform:scaleX(1.0146);">Ввод</span>
<div class="abs" style="left:1335.00px;top:97.00px;width:100.00px;height:22.00px;background:#f2f2f2;border:1px solid #3f3f3f;"></div>
<span class="t" style="left:1339.10px;top:101px;font-size:13.30px;color:#3f3f3f;font-weight:bold;transform-origin:0 0;transform:scaleX(0.9415);">Вывод</span>
<span class="t" style="left:1171.20px;top:135px;font-size:12.30px;color:#666;transform-origin:0 0;transform:scaleX(0.8946);">Стили</span>
<div class="abs" style="left:1461.00px;top:61.00px;width:1.00px;height:84.00px;background:#d9d9d9;"></div>
<svg class="abs" style="left:1479.00px;top:65.00px" width="27" height="27" viewBox="0 0 27 27"><g fill="#fff" stroke="#8a8a8a" stroke-width="1"><rect x=".5" y=".5" width="7" height="5"/><rect x="7.5" y=".5" width="7" height="5"/><rect x=".5" y="16.5" width="7" height="5"/><rect x="7.5" y="16.5" width="7" height="5"/><rect x=".5" y="21.5" width="7" height="5"/><rect x="7.5" y="21.5" width="7" height="5"/></g><rect x="11.5" y="8.5" width="7" height="5" fill="#c5d6ee" stroke="#8a8a8a"/><rect x="18.5" y="8.5" width="7" height="5" fill="#c5d6ee" stroke="#8a8a8a"/><path d="M1,11 H9 M4,8 L1,11 L4,14" fill="none" stroke="#3b76b8" stroke-width="1.6"/></svg>
<span class="t" style="left:1467.90px;top:100px;font-size:12.30px;color:#444;transform-origin:0 0;transform:scaleX(0.9245);">Вставить</span>
<svg class="abs" style="left:1489.50px;top:120.00px" width="5" height="3" viewBox="0 0 5 3"><polygon points="0,0 5,0 2.5,3" fill="#666"/></svg>
<svg class="abs" style="left:1529.00px;top:65.00px" width="30" height="27" viewBox="0 0 30 27"><g fill="#fff" stroke="#8a8a8a" stroke-width="1"><rect x=".5" y=".5" width="7" height="5"/><rect x="7.5" y=".5" width="7" height="5"/><rect x=".5" y="16.5" width="7" height="5"/><rect x="7.5" y="16.5" width="7" height="5"/><rect x=".5" y="21.5" width="7" height="5"/><rect x="7.5" y="21.5" width="7" height="5"/></g><path d="M6.5,8.5 H15.5 L18,11 L15.5,13.5 H6.5 Z" fill="#c5d6ee" stroke="#8a8a8a"/><path d="M15,5.5 L29,18 M29,6 L15,18.5" stroke="#d9623c" stroke-width="2.1"/></svg>
<span class="t" style="left:1520.60px;top:100px;font-size:12.30px;color:#444;transform-origin:0 0;transform:scaleX(0.9391);">Удалить</span>
<svg class="abs" style="left:1540.50px;top:120.00px" width="5" height="3" viewBox="0 0 5 3"><polygon points="0,0 5,0 2.5,3" fill="#666"/></svg>
<svg class="abs" style="left:1577.00px;top:63.00px" width="30" height="33" viewBox="0 0 30 33"><path d="M1.5,3.5 H23.5 M1.5,.8 V6.2 M23.5,.8 V6.2 M5.6,1 L3,3.5 L5.6,6 M19.4,1 L22,3.5 L19.4,6" fill="none" stroke="#3b76b8" stroke-width="1.1"/><path d="M1.5,27.5 V31.5 H8 L9.5,29 L11,31.5 H16.5 L19.5,27.5" fill="#fff" stroke="#8a8a8a"/><rect x="1.5" y="7.5" width="27" height="20" fill="#fff" stroke="#8a8a8a"/><path d="M8.5,7.5 V27.5 M16.5,7.5 V27.5 M23.5,7.5 V27.5 M1.5,12.5 H28.5 M1.5,22.5 H28.5" stroke="#b0b0b0" fill="none"/><rect x="9.3" y="13.3" width="6.6" height="8.6" fill="#4a7ebb"/></svg>
<span class="t" style="left:1569.60px;top:100px;font-size:12.30px;color:#444;transform-origin:0 0;transform:scaleX(0.9956);">Формат</span>
<svg class="abs" style="left:1588.50px;top:120.00px" width="5" height="3" viewBox="0 0 5 3"><polygon points="0,0 5,0 2.5,3" fill="#666"/></svg>
<span class="t" style="left:1520.30px;top:135px;font-size:12.30px;color:#666;transform-origin:0 0;transform:scaleX(0.9890);">Ячейки</span>
<div class="abs" style="left:1620.00px;top:61.00px;width:1.00px;height:84.00px;background:#d9d9d9;"></div>
<svg class="abs" style="left:1627.00px;top:61.00px" width="17" height="19" viewBox="0 0 17 19"><text x="1" y="16.6" font-size="20.5" font-family="Liberation Sans,sans-serif" fill="#444" stroke="#444" stroke-width=".55" textLength="14.5" lengthAdjust="spacingAndGlyphs">Σ</text></svg>
<span class="t" style="left:1646.60px;top:66px;font-size:12.30px;color:#444;transform-origin:0 0;transform:scaleX(0.9853);">Автосумма</span>
<svg class="abs" style="left:1719.00px;top:70.00px" width="5" height="3" viewBox="0 0 5 3"><polygon points="0,0 5,0 2.5,3" fill="#666"/></svg>
<svg class="abs" style="left:1629.00px;top:86.00px" width="14" height="16" viewBox="0 0 14 16"><rect x=".5" y="2.5" width="13" height="13" fill="#fff" stroke="#777"/><rect x="0" y="0" width="14" height="3.4" fill="#777"/><path d="M7,5.5 V12.7 M3.8,9.6 L7,12.8 L10.2,9.6" fill="none" stroke="#3b76b8" stroke-width="2"/></svg>
<span class="t" style="left:1646.60px;top:89px;font-size:12.30px;color:#444;transform-origin:0 0;transform:scaleX(0.9854);">Заполнить</span>
<svg class="abs" style="left:1709.00px;top:93.00px" width="5" height="3" viewBox="0 0 5 3"><polygon points="0,0 5,0 2.5,3" fill="#666"/></svg>
<svg class="abs" style="left:1628.00px;top:109.00px" width="16" height="15" viewBox="0 0 16 15"><path d="M9,1 L15,6 L8.5,12.5 H5 L1.5,9 Z" fill="#e8788a"/><path d="M5.2,4.8 L11.5,10" stroke="#fff" stroke-width=".8"/><path d="M1.5,9 L5,12.5 H8.5" fill="#fff" stroke="#e8788a" stroke-width=".8"/><path d="M2,14 H14" stroke="#777" stroke-width="1"/></svg>
<span class="t" style="left:1646.60px;top:112px;font-size:12.30px;color:#444;transform-origin:0 0;transform:scaleX(0.9674);">Очистить</span>
<svg class="abs" style="left:1702.00px;top:116.00px" width="5" height="3" viewBox="0 0 5 3"><polygon points="0,0 5,0 2.5,3" fill="#666"/></svg>
<svg class="abs" style="left:1748.00px;top:64.00px" width="31" height="30" viewBox="0 0 31 30"><text x="0" y="12.5" font-size="15" font-weight="bold" font-family="Liberation Sans,sans-serif" fill="#3b76b8" textLength="10" lengthAdjust="spacingAndGlyphs">A</text><text x="1" y="27" font-size="14.5" font-family="Liberation Sans,sans-serif" font-weight="bold" fill="#a05aa8">Я</text><path d="M12,9 H30 L23,16.5 V24 L19.5,21.5 V16.5 Z" fill="#777"/></svg>
<span class="t" style="left:1731.30px;top:100px;font-size:12.30px;color:#444;transform-origin:0 0;transform:scaleX(0.9747);">Сортировка</span>
<span class="t" style="left:1735.30px;top:116px;font-size:12.30px;color:#444;transform-origin:0 0;transform:scaleX(0.9699);">и фильтр</span>
<svg class="abs" style="left:1789.50px;top:120.00px" width="5" height="3" viewBox="0 0 5 3"><polygon points="0,0 5,0 2.5,3" fill="#666"/></svg>
<svg class="abs" style="left:1817.00px;top:64.00px" width="30" height="30" viewBox="0 0 30 30"><circle cx="18.5" cy="10.5" r="8.5" fill="#fff" stroke="#3b76b8" stroke-width="2.2"/><path d="M12.5,17 L2,27.5" stroke="#3b76b8" stroke-width="3.4" stroke-linecap="round"/></svg>
<span class="t" style="left:1809.60px;top:100px;font-size:12.30px;color:#444;transform-origin:0 0;transform:scaleX(0.9871);">Найти и</span>
<span class="t" style="left:1802.30px;top:116px;font-size:12.30px;color:#444;transform-origin:0 0;transform:scaleX(0.9460);">выделить</span>
<svg class="abs" style="left:1857.00px;top:120.00px" width="5" height="3" viewBox="0 0 5 3"><polygon points="0,0 5,0 2.5,3" fill="#666"/></svg>
<span class="t" style="left:1701.30px;top:135px;font-size:12.30px;color:#666;transform-origin:0 0;transform:scaleX(0.9328);">Редактирование</span>
<div class="abs" style="left:1869.00px;top:61.00px;width:1.00px;height:84.00px;background:#d9d9d9;"></div>
<svg class="abs" style="left:1901.00px;top:138.00px" width="9" height="6" viewBox="0 0 9 6"><path d="M.8,5 L4.5,1.2 L8.2,5" fill="none" stroke="#555" stroke-width="1.5"/></svg>
<div id="fbar"></div>
<div class="abs" style="left:5.00px;top:160.00px;width:102.00px;height:26.00px;background:#fff;border:1px solid #c6c6c6;"></div>
<span class="t" style="left:12.10px;top:168px;font-size:12.30px;color:#444;transform-origin:0 0;transform:scaleX(1.0782);">M25</span>
<svg class="abs" style="left:93.00px;top:171.00px" width="7" height="3.5" viewBox="0 0 7 3.5"><polygon points="0,0 7,0 3.5,3.5" fill="#666"/></svg>
<div class="abs" style="left:121.00px;top:169.00px;width:2.00px;height:2.00px;background:#a3a3a3;"></div>
<div class="abs" style="left:121.00px;top:173.00px;width:2.00px;height:2.00px;background:#a3a3a3;"></div>
<div class="abs" style="left:121.00px;top:177.00px;width:2.00px;height:2.00px;background:#a3a3a3;"></div>
<div class="abs" style="left:137.00px;top:160.00px;width:110.00px;height:26.00px;background:#fff;border:1px solid #c6c6c6;"></div>
<svg class="abs" style="left:150.00px;top:168.00px" width="12" height="10" viewBox="0 0 12 10"><path d="M1,0.5 L10.5,9.5 M10.5,.5 L1,9.5" stroke="#b5b5b5" stroke-width="1.4"/></svg>
<svg class="abs" style="left:185.00px;top:167.00px" width="15" height="11" viewBox="0 0 15 11"><path d="M1,6.5 L5,10 L13.5,1" fill="none" stroke="#b5b5b5" stroke-width="1.8"/></svg>
<span class="t" style="left:222.10px;top:166px;font-size:15.00px;color:#555;font-family:'Liberation Serif',serif;font-style:italic;">f</span>
<span class="t" style="left:227.60px;top:170px;font-size:10.50px;color:#555;font-family:'Liberation Serif',serif;font-weight:bold;font-style:italic;">x</span>
<div class="abs" style="left:250.00px;top:160.00px;width:1665.00px;height:26.00px;background:#fff;border:1px solid #c6c6c6;"></div>
<svg class="abs" style="left:1902.00px;top:169.00px" width="9" height="6" viewBox="0 0 9 6"><path d="M.8,1 L4.5,4.8 L8.2,1" fill="none" stroke="#555" stroke-width="1.6"/></svg>
<div id="grid">
<div class="abs" style="left:0;top:0;width:1579px;height:20px;background:#e6e6e6;border-bottom:1px solid #9e9e9e"></div>
<div class="abs" style="left:0;top:0;width:26px;height:19px;border-right:1px solid #ababab"></div>
<svg class="abs" style="left:9px;top:6px" width="13" height="13"><polygon points="12,0 12,12 0,12" fill="#b7b7b7"/></svg>
<div class="ch" style="left:26px;width:28px;">A</div>
<div class="ch" style="left:54px;width:407px;">B</div>
<div class="ch" style="left:461px;width:112px;">C</div>
<div class="ch" style="left:573px;width:96px;">D</div>
<div class="ch" style="left:669px;width:122px;">E</div>
<div class="ch" style="left:791px;width:64px;">F</div>
<div class="ch" style="left:855px;width:64px;">G</div>
<div class="ch" style="left:919px;width:64px;">H</div>
<div class="ch" style="left:983px;width:64px;">I</div>
<div class="ch" style="left:1047px;width:64px;">J</div>
<div class="ch" style="left:1111px;width:64px;">K</div>
<div class="ch" style="left:1175px;width:64px;">L</div>
<div class="ch" style="left:1239px;width:64px;background:#d2d2d2;color:#217346;border-bottom:2px solid #217346;height:20px;">M</div>
<div class="ch" style="left:1303px;width:64px;">N</div>
<div class="ch" style="left:1367px;width:64px;">O</div>
<div class="ch" style="left:1431px;width:64px;">P</div>
<div class="ch" style="left:1495px;width:64px;">Q</div>
<div class="ch" style="left:1559px;width:64px;">R</div>
<div class="rh" style="top:20px;height:27px;"><span style="bottom:1px">1</span></div>
<div class="rh" style="top:47px;height:20px;"><span>2</span></div>
<div class="rh" style="top:67px;height:20px;"><span>3</span></div>
<div class="rh" style="top:87px;height:30px;"><span>4</span></div>
<div class="rh" style="top:117px;height:25px;"><span>5</span></div>
<div class="rh" style="top:142px;height:25px;"><span>6</span></div>
<div class="rh" style="top:167px;height:25px;"><span>7</span></div>
<div class="rh" style="top:192px;height:26px;"><span style="bottom:1px">8</span></div>
<div class="rh" style="top:218px;height:26px;"><span style="bottom:1px">9</span></div>
<div class="rh" style="top:244px;height:23px;"><span>10</span></div>
<div class="rh" style="top:267px;height:26px;"><span style="bottom:1px">11</span></div>
<div class="rh" style="top:293px;height:25px;"><span>12</span></div>
<div class="rh" style="top:318px;height:25px;"><span>13</span></div>
<div class="rh" style="top:343px;height:25px;"><span>14</span></div>
<div class="rh" style="top:368px;height:20px;"><span>15</span></div>
<div class="rh" style="top:388px;height:25px;"><span>16</span></div>
<div class="rh" style="top:413px;height:26px;"><span style="bottom:1px">17</span></div>
<div class="rh" style="top:439px;height:26px;"><span style="bottom:1px">18</span></div>
<div class="rh" style="top:465px;height:30px;"><span>19</span></div>
<div class="rh" style="top:495px;height:25px;"><span>20</span></div>
<div class="rh" style="top:520px;height:25px;"><span>21</span></div>
<div class="rh" style="top:545px;height:25px;"><span>22</span></div>
<div class="rh" style="top:570px;height:25px;"><span>23</span></div>
<div class="rh" style="top:595px;height:25px;"><span>24</span></div>
<div class="rh" style="top:620px;height:25px;background:#d2d2d2;color:#217346;border-right:2px solid #217346;"><span>25</span></div>
<div class="rh" style="top:645px;height:26px;"><span style="bottom:1px">26</span></div>
<div class="rh" style="top:671px;height:26px;"><span style="bottom:1px">27</span></div>
<div class="rh" style="top:697px;height:26px;"><span style="bottom:1px">28</span></div>
<div class="rh" style="top:723px;height:20px;"><span>29</span></div>
<div class="rh" style="top:743px;height:20px;"><span>30</span></div>
<div class="rh" style="top:763px;height:25px;"><span>31</span></div>
<div class="rh" style="top:788px;height:25px;"><span>32</span></div>
<div class="c" style="left:26px;top:20px;width:765px;height:27px;"><span style="left:0;right:0;text-align:center;font-weight:bold;font-size:21px;line-height:24px;bottom:0px">Смета затрат на оснащение офиса фирмы</span></div>
<div class="c" style="left:791px;top:20px;width:64px;height:27px;"></div>
<div class="c" style="left:855px;top:20px;width:64px;height:27px;"></div>
<div class="c" style="left:919px;top:20px;width:64px;height:27px;"></div>
<div class="c" style="left:983px;top:20px;width:64px;height:27px;"></div>
<div class="c" style="left:1047px;top:20px;width:64px;height:27px;"></div>
<div class="c" style="left:1111px;top:20px;width:64px;height:27px;"></div>
<div class="c" style="left:1175px;top:20px;width:64px;height:27px;"></div>
<div class="c" style="left:1239px;top:20px;width:64px;height:27px;"></div>
<div class="c" style="left:1303px;top:20px;width:64px;height:27px;"></div>
<div class="c" style="left:1367px;top:20px;width:64px;height:27px;"></div>
<div class="c" style="left:1431px;top:20px;width:64px;height:27px;"></div>
<div class="c" style="left:1495px;top:20px;width:64px;height:27px;"></div>
<div class="c" style="left:1559px;top:20px;width:64px;height:27px;"></div>
<div class="c" style="left:26px;top:47px;width:28px;height:20px;"></div>
<div class="c" style="left:54px;top:47px;width:407px;height:20px;"></div>
<div class="c" style="left:461px;top:47px;width:112px;height:20px;"></div>
<div class="c" style="left:573px;top:47px;width:96px;height:20px;"></div>
<div class="c" style="left:669px;top:47px;width:122px;height:20px;"></div>
<div class="c" style="left:791px;top:47px;width:64px;height:20px;"></div>
<div class="c" style="left:855px;top:47px;width:64px;height:20px;"></div>
<div class="c" style="left:919px;top:47px;width:64px;height:20px;"></div>
<div class="c" style="left:983px;top:47px;width:64px;height:20px;"></div>
<div class="c" style="left:1047px;top:47px;width:64px;height:20px;"></div>
<div class="c" style="left:1111px;top:47px;width:64px;height:20px;"></div>
<div class="c" style="left:1175px;top:47px;width:64px;height:20px;"></div>
<div class="c" style="left:1239px;top:47px;width:64px;height:20px;"></div>
<div class="c" style="left:1303px;top:47px;width:64px;height:20px;"></div>
<div class="c" style="left:1367px;top:47px;width:64px;height:20px;"></div>
<div class="c" style="left:1431px;top:47px;width:64px;height:20px;"></div>
<div class="c" style="left:1495px;top:47px;width:64px;height:20px;"></div>
<div class="c" style="left:1559px;top:47px;width:64px;height:20px;"></div>
<div class="c" style="left:26px;top:67px;width:28px;height:20px;border-bottom-color:#000;"></div>
<div class="c" style="left:54px;top:67px;width:407px;height:20px;border-bottom-color:#000;"></div>
<div class="c" style="left:461px;top:67px;width:112px;height:20px;border-bottom-color:#000;"></div>
<div class="c" style="left:573px;top:67px;width:96px;height:20px;border-bottom-color:#000;"></div>
<div class="c" style="left:669px;top:67px;width:122px;height:20px;border-bottom-color:#000;"></div>
<div class="c" style="left:791px;top:67px;width:64px;height:20px;"></div>
<div class="c" style="left:855px;top:67px;width:64px;height:20px;"></div>
<div class="c" style="left:919px;top:67px;width:64px;height:20px;"></div>
<div class="c" style="left:983px;top:67px;width:64px;height:20px;"></div>
<div class="c" style="left:1047px;top:67px;width:64px;height:20px;"></div>
<div class="c" style="left:1111px;top:67px;width:64px;height:20px;"></div>
<div class="c" style="left:1175px;top:67px;width:64px;height:20px;"></div>
<div class="c" style="left:1239px;top:67px;width:64px;height:20px;"></div>
<div class="c" style="left:1303px;top:67px;width:64px;height:20px;"></div>
<div class="c" style="left:1367px;top:67px;width:64px;height:20px;"></div>
<div class="c" style="left:1431px;top:67px;width:64px;height:20px;"></div>
<div class="c" style="left:1495px;top:67px;width:64px;height:20px;"></div>
<div class="c" style="left:1559px;top:67px;width:64px;height:20px;"></div>
<div class="c" style="left:26px;top:87px;width:28px;height:30px;border-right-color:#000;border-bottom-color:#000;"><span style="left:0;right:0;text-align:center;font-weight:bold;letter-spacing:.34px;bottom:4px">№</span></div>
<div class="c" style="left:54px;top:87px;width:407px;height:30px;border-right-color:#000;border-bottom-color:#000;"><span style="left:0;right:0;text-align:center;font-weight:bold;letter-spacing:.34px;bottom:4px">Наименование</span></div>
<div class="c" style="left:461px;top:87px;width:112px;height:30px;border-right-color:#000;border-bottom-color:#000;"><span style="left:0;right:0;text-align:center;font-weight:bold;letter-spacing:.34px;bottom:4px">Количество</span></div>
<div class="c" style="left:573px;top:87px;width:96px;height:30px;border-right-color:#000;border-bottom-color:#000;"><span style="left:0;right:0;text-align:center;font-weight:bold;letter-spacing:.34px;bottom:4px">Цена</span></div>
<div class="c" style="left:669px;top:87px;width:122px;height:30px;border-right-color:#000;border-bottom-color:#000;"><span style="left:0;right:0;text-align:center;font-weight:bold;letter-spacing:.34px;bottom:4px">Сумма</span></div>
<div class="c" style="left:791px;top:87px;width:64px;height:30px;"></div>
<div class="c" style="left:855px;top:87px;width:64px;height:30px;"></div>
<div class="c" style="left:919px;top:87px;width:64px;height:30px;"></div>
<div class="c" style="left:983px;top:87px;width:64px;height:30px;"></div>
<div class="c" style="left:1047px;top:87px;width:64px;height:30px;"></div>
<div class="c" style="left:1111px;top:87px;width:64px;height:30px;"></div>
<div class="c" style="left:1175px;top:87px;width:64px;height:30px;"></div>
<div class="c" style="left:1239px;top:87px;width:64px;height:30px;"></div>
<div class="c" style="left:1303px;top:87px;width:64px;height:30px;"></div>
<div class="c" style="left:1367px;top:87px;width:64px;height:30px;"></div>
<div class="c" style="left:1431px;top:87px;width:64px;height:30px;"></div>
<div class="c" style="left:1495px;top:87px;width:64px;height:30px;"></div>
<div class="c" style="left:1559px;top:87px;width:64px;height:30px;"></div>
<div class="c" style="left:26px;top:117px;width:765px;height:25px;border-right-color:#000;border-bottom-color:#000;"><span style="left:0;right:0;text-align:center;font-weight:bold;letter-spacing:.34px">Мебель</span></div>
<div class="c" style="left:791px;top:117px;width:64px;height:25px;"></div>
<div class="c" style="left:855px;top:117px;width:64px;height:25px;"></div>
<div class="c" style="left:919px;top:117px;width:64px;height:25px;"></div>
<div class="c" style="left:983px;top:117px;width:64px;height:25px;"></div>
<div class="c" style="left:1047px;top:117px;width:64px;height:25px;"></div>
<div class="c" style="left:1111px;top:117px;width:64px;height:25px;"></div>
<div class="c" style="left:1175px;top:117px;width:64px;height:25px;"></div>
<div class="c" style="left:1239px;top:117px;width:64px;height:25px;"></div>
<div class="c" style="left:1303px;top:117px;width:64px;height:25px;"></div>
<div class="c" style="left:1367px;top:117px;width:64px;height:25px;"></div>
<div class="c" style="left:1431px;top:117px;width:64px;height:25px;"></div>
<div class="c" style="left:1495px;top:117px;width:64px;height:25px;"></div>
<div class="c" style="left:1559px;top:117px;width:64px;height:25px;"></div>
<div class="c" style="left:26px;top:142px;width:28px;height:25px;border-right-color:#000;border-bottom-color:#000;"><span style="left:3px">1</span></div>
<div class="c" style="left:54px;top:142px;width:407px;height:25px;border-right-color:#000;border-bottom-color:#000;"><span style="left:3px;letter-spacing:.17px">Стол офисный</span></div>
<div class="c" style="left:461px;top:142px;width:112px;height:25px;border-right-color:#000;border-bottom-color:#000;"></div>
<div class="c" style="left:573px;top:142px;width:96px;height:25px;border-right-color:#000;border-bottom-color:#000;"></div>
<div class="c" style="left:669px;top:142px;width:122px;height:25px;border-right-color:#000;border-bottom-color:#000;"></div>
<div class="c" style="left:791px;top:142px;width:64px;height:25px;"></div>
<div class="c" style="left:855px;top:142px;width:64px;height:25px;"></div>
<div class="c" style="left:919px;top:142px;width:64px;height:25px;"></div>
<div class="c" style="left:983px;top:142px;width:64px;height:25px;"></div>
<div class="c" style="left:1047px;top:142px;width:64px;height:25px;"></div>
<div class="c" style="left:1111px;top:142px;width:64px;height:25px;"></div>
<div class="c" style="left:1175px;top:142px;width:64px;height:25px;"></div>
<div class="c" style="left:1239px;top:142px;width:64px;height:25px;"></div>
<div class="c" style="left:1303px;top:142px;width:64px;height:25px;"></div>
<div class="c" style="left:1367px;top:142px;width:64px;height:25px;"></div>
<div class="c" style="left:1431px;top:142px;width:64px;height:25px;"></div>
<div class="c" style="left:1495px;top:142px;width:64px;height:25px;"></div>
<div class="c" style="left:1559px;top:142px;width:64px;height:25px;"></div>
<div class="c" style="left:26px;top:167px;width:28px;height:25px;border-right-color:#000;border-bottom-color:#000;"><span style="left:3px">2</span></div>
<div class="c" style="left:54px;top:167px;width:407px;height:25px;border-right-color:#000;border-bottom-color:#000;"><span style="left:3px;letter-spacing:.17px">Стул офисный</span></div>
<div class="c" style="left:461px;top:167px;width:112px;height:25px;border-right-color:#000;border-bottom-color:#000;"></div>
<div class="c" style="left:573px;top:167px;width:96px;height:25px;border-right-color:#000;border-bottom-color:#000;"></div>
<div class="c" style="left:669px;top:167px;width:122px;height:25px;border-right-color:#000;border-bottom-color:#000;"></div>
<div class="c" style="left:791px;top:167px;width:64px;height:25px;"></div>
<div class="c" style="left:855px;top:167px;width:64px;height:25px;"></div>
<div class="c" style="left:919px;top:167px;width:64px;height:25px;"></div>
<div class="c" style="left:983px;top:167px;width:64px;height:25px;"></div>
<div class="c" style="left:1047px;top:167px;width:64px;height:25px;"></div>
<div class="c" style="left:1111px;top:167px;width:64px;height:25px;"></div>
<div class="c" style="left:1175px;top:167px;width:64px;height:25px;"></div>
<div class="c" style="left:1239px;top:167px;width:64px;height:25px;"></div>
<div class="c" style="left:1303px;top:167px;width:64px;height:25px;"></div>
<div class="c" style="left:1367px;top:167px;width:64px;height:25px;"></div>
<div class="c" style="left:1431px;top:167px;width:64px;height:25px;"></div>
<div class="c" style="left:1495px;top:167px;width:64px;height:25px;"></div>
<div class="c" style="left:1559px;top:167px;width:64px;height:25px;"></div>
<div class="c" style="left:26px;top:192px;width:28px;height:26px;border-right-color:#000;border-bottom-color:#000;"><span style="left:3px;bottom:2px">3</span></div>
<div class="c" style="left:54px;top:192px;width:407px;height:26px;border-right-color:#000;border-bottom-color:#000;"><span style="left:3px;letter-spacing:.17px;bottom:2px">Шкаф для хранения бумаг</span></div>
<div class="c" style="left:461px;top:192px;width:112px;height:26px;border-right-color:#000;border-bottom-color:#000;"></div>
<div class="c" style="left:573px;top:192px;width:96px;height:26px;border-right-color:#000;border-bottom-color:#000;"></div>
<div class="c" style="left:669px;top:192px;width:122px;height:26px;border-right-color:#000;border-bottom-color:#000;"></div>
<div class="c" style="left:791px;top:192px;width:64px;height:26px;"></div>
<div class="c" style="left:855px;top:192px;width:64px;height:26px;"></div>
<div class="c" style="left:919px;top:192px;width:64px;height:26px;"></div>
<div class="c" style="left:983px;top:192px;width:64px;height:26px;"></div>
<div class="c" style="left:1047px;top:192px;width:64px;height:26px;"></div>
<div class="c" style="left:1111px;top:192px;width:64px;height:26px;"></div>
<div class="c" style="left:1175px;top:192px;width:64px;height:26px;"></div>
<div class="c" style="left:1239px;top:192px;width:64px;height:26px;"></div>
<div class="c" style="left:1303px;top:192px;width:64px;height:26px;"></div>
<div class="c" style="left:1367px;top:192px;width:64px;height:26px;"></div>
<div class="c" style="left:1431px;top:192px;width:64px;height:26px;"></div>
<div class="c" style="left:1495px;top:192px;width:64px;height:26px;"></div>
<div class="c" style="left:1559px;top:192px;width:64px;height:26px;"></div>
<div class="c" style="left:26px;top:218px;width:28px;height:26px;border-right-color:#000;border-bottom-color:#000;"></div>
<div class="c" style="left:54px;top:218px;width:407px;height:26px;border-right-color:#000;border-bottom-color:#000;"><span style="right:3px;font-weight:bold;letter-spacing:.34px;bottom:2px">Итог мебель</span></div>
<div class="c" style="left:461px;top:218px;width:112px;height:26px;border-right-color:#000;border-bottom-color:#000;"></div>
<div class="c" style="left:573px;top:218px;width:96px;height:26px;border-right-color:#000;border-bottom-color:#000;"></div>
<div class="c" style="left:669px;top:218px;width:122px;height:26px;border-right-color:#000;border-bottom-color:#000;"><span style="left:3px;bottom:2px">121</span></div>
<div class="c" style="left:791px;top:218px;width:64px;height:26px;"></div>
<div class="c" style="left:855px;top:218px;width:64px;height:26px;"></div>
<div class="c" style="left:919px;top:218px;width:64px;height:26px;"></div>
<div class="c" style="left:983px;top:218px;width:64px;height:26px;"></div>
<div class="c" style="left:1047px;top:218px;width:64px;height:26px;"></div>
<div class="c" style="left:1111px;top:218px;width:64px;height:26px;"></div>
<div class="c" style="left:1175px;top:218px;width:64px;height:26px;"></div>
<div class="c" style="left:1239px;top:218px;width:64px;height:26px;"></div>
<div class="c" style="left:1303px;top:218px;width:64px;height:26px;"></div>
<div class="c" style="left:1367px;top:218px;width:64px;height:26px;"></div>
<div class="c" style="left:1431px;top:218px;width:64px;height:26px;"></div>
<div class="c" style="left:1495px;top:218px;width:64px;height:26px;"></div>
<div class="c" style="left:1559px;top:218px;width:64px;height:26px;"></div>
<div class="c" style="left:26px;top:244px;width:765px;height:23px;border-right-color:#000;border-bottom-color:#000;"><span style="left:0;right:0;text-align:center;font-weight:bold;letter-spacing:.34px;bottom:0px">Офисная техника</span></div>
<div class="c" style="left:791px;top:244px;width:64px;height:23px;"></div>
<div class="c" style="left:855px;top:244px;width:64px;height:23px;"></div>
<div class="c" style="left:919px;top:244px;width:64px;height:23px;"></div>
<div class="c" style="left:983px;top:244px;width:64px;height:23px;"></div>
<div class="c" style="left:1047px;top:244px;width:64px;height:23px;"></div>
<div class="c" style="left:1111px;top:244px;width:64px;height:23px;"></div>
<div class="c" style="left:1175px;top:244px;width:64px;height:23px;"></div>
<div class="c" style="left:1239px;top:244px;width:64px;height:23px;"></div>
<div class="c" style="left:1303px;top:244px;width:64px;height:23px;"></div>
<div class="c" style="left:1367px;top:244px;width:64px;height:23px;"></div>
<div class="c" style="left:1431px;top:244px;width:64px;height:23px;"></div>
<div class="c" style="left:1495px;top:244px;width:64px;height:23px;"></div>
<div class="c" style="left:1559px;top:244px;width:64px;height:23px;"></div>
<div class="c" style="left:26px;top:267px;width:28px;height:26px;border-right-color:#000;border-bottom-color:#000;"><span style="left:3px;bottom:2px">4</span></div>
<div class="c" style="left:54px;top:267px;width:407px;height:26px;border-right-color:#000;border-bottom-color:#000;"><span style="left:3px;letter-spacing:.17px;bottom:2px">Система бесперебойного питания</span></div>
<div class="c" style="left:461px;top:267px;width:112px;height:26px;border-right-color:#000;border-bottom-color:#000;"></div>
<div class="c" style="left:573px;top:267px;width:96px;height:26px;border-right-color:#000;border-bottom-color:#000;"></div>
<div class="c" style="left:669px;top:267px;width:122px;height:26px;border-right-color:#000;border-bottom-color:#000;"></div>
<div class="c" style="left:791px;top:267px;width:64px;height:26px;"></div>
<div class="c" style="left:855px;top:267px;width:64px;height:26px;"></div>
<div class="c" style="left:919px;top:267px;width:64px;height:26px;"></div>
<div class="c" style="left:983px;top:267px;width:64px;height:26px;"></div>
<div class="c" style="left:1047px;top:267px;width:64px;height:26px;"></div>
<div class="c" style="left:1111px;top:267px;width:64px;height:26px;"></div>
<div class="c" style="left:1175px;top:267px;width:64px;height:26px;"></div>
<div class="c" style="left:1239px;top:267px;width:64px;height:26px;"></div>
<div class="c" style="left:1303px;top:267px;width:64px;height:26px;"></div>
<div class="c" style="left:1367px;top:267px;width:64px;height:26px;"></div>
<div class="c" style="left:1431px;top:267px;width:64px;height:26px;"></div>
<div class="c" style="left:1495px;top:267px;width:64px;height:26px;"></div>
<div class="c" style="left:1559px;top:267px;width:64px;height:26px;"></div>
<div class="c" style="left:26px;top:293px;width:28px;height:25px;border-right-color:#000;border-bottom-color:#000;"><span style="left:3px">5</span></div>
<div class="c" style="left:54px;top:293px;width:407px;height:25px;border-right-color:#000;border-bottom-color:#000;"><span style="left:3px;letter-spacing:.17px">Монитор</span></div>
<div class="c" style="left:461px;top:293px;width:112px;height:25px;border-right-color:#000;border-bottom-color:#000;"></div>
<div class="c" style="left:573px;top:293px;width:96px;height:25px;border-right-color:#000;border-bottom-color:#000;"></div>
<div class="c" style="left:669px;top:293px;width:122px;height:25px;border-right-color:#000;border-bottom-color:#000;"></div>
<div class="c" style="left:791px;top:293px;width:64px;height:25px;"></div>
<div class="c" style="left:855px;top:293px;width:64px;height:25px;"></div>
<div class="c" style="left:919px;top:293px;width:64px;height:25px;"></div>
<div class="c" style="left:983px;top:293px;width:64px;height:25px;"></div>
<div class="c" style="left:1047px;top:293px;width:64px;height:25px;"></div>
<div class="c" style="left:1111px;top:293px;width:64px;height:25px;"></div>
<div class="c" style="left:1175px;top:293px;width:64px;height:25px;"></div>
<div class="c" style="left:1239px;top:293px;width:64px;height:25px;"></div>
<div class="c" style="left:1303px;top:293px;width:64px;height:25px;"></div>
<div class="c" style="left:1367px;top:293px;width:64px;height:25px;"></div>
<div class="c" style="left:1431px;top:293px;width:64px;height:25px;"></div>
<div class="c" style="left:1495px;top:293px;width:64px;height:25px;"></div>
<div class="c" style="left:1559px;top:293px;width:64px;height:25px;"></div>
<div class="c" style="left:26px;top:318px;width:28px;height:25px;border-right-color:#000;border-bottom-color:#000;"><span style="left:3px">6</span></div>
<div class="c" style="left:54px;top:318px;width:407px;height:25px;border-right-color:#000;border-bottom-color:#000;"><span style="left:3px;letter-spacing:.17px">Клавиатура</span></div>
<div class="c" style="left:461px;top:318px;width:112px;height:25px;border-right-color:#000;border-bottom-color:#000;"></div>
<div class="c" style="left:573px;top:318px;width:96px;height:25px;border-right-color:#000;border-bottom-color:#000;"></div>
<div class="c" style="left:669px;top:318px;width:122px;height:25px;border-right-color:#000;border-bottom-color:#000;"></div>
<div class="c" style="left:791px;top:318px;width:64px;height:25px;"></div>
<div class="c" style="left:855px;top:318px;width:64px;height:25px;"></div>
<div class="c" style="left:919px;top:318px;width:64px;height:25px;"></div>
<div class="c" style="left:983px;top:318px;width:64px;height:25px;"></div>
<div class="c" style="left:1047px;top:318px;width:64px;height:25px;"></div>
<div class="c" style="left:1111px;top:318px;width:64px;height:25px;"></div>
<div class="c" style="left:1175px;top:318px;width:64px;height:25px;"></div>
<div class="c" style="left:1239px;top:318px;width:64px;height:25px;"></div>
<div class="c" style="left:1303px;top:318px;width:64px;height:25px;"></div>
<div class="c" style="left:1367px;top:318px;width:64px;height:25px;"></div>
<div class="c" style="left:1431px;top:318px;width:64px;height:25px;"></div>
<div class="c" style="left:1495px;top:318px;width:64px;height:25px;"></div>
<div class="c" style="left:1559px;top:318px;width:64px;height:25px;"></div>
<div class="c" style="left:26px;top:343px;width:28px;height:25px;border-right-color:#000;border-bottom-color:#000;"><span style="left:3px">7</span></div>
<div class="c" style="left:54px;top:343px;width:407px;height:25px;border-right-color:#000;border-bottom-color:#000;"><span style="left:3px;letter-spacing:.17px">Мышь</span></div>
<div class="c" style="left:461px;top:343px;width:112px;height:25px;border-right-color:#000;border-bottom-color:#000;"></div>
<div class="c" style="left:573px;top:343px;width:96px;height:25px;border-right-color:#000;border-bottom-color:#000;"></div>
<div class="c" style="left:669px;top:343px;width:122px;height:25px;border-right-color:#000;border-bottom-color:#000;"></div>
<div class="c" style="left:791px;top:343px;width:64px;height:25px;"></div>
<div class="c" style="left:855px;top:343px;width:64px;height:25px;"></div>
<div class="c" style="left:919px;top:343px;width:64px;height:25px;"></div>
<div class="c" style="left:983px;top:343px;width:64px;height:25px;"></div>
<div class="c" style="left:1047px;top:343px;width:64px;height:25px;"></div>
<div class="c" style="left:1111px;top:343px;width:64px;height:25px;"></div>
<div class="c" style="left:1175px;top:343px;width:64px;height:25px;"></div>
<div class="c" style="left:1239px;top:343px;width:64px;height:25px;"></div>
<div class="c" style="left:1303px;top:343px;width:64px;height:25px;"></div>
<div class="c" style="left:1367px;top:343px;width:64px;height:25px;"></div>
<div class="c" style="left:1431px;top:343px;width:64px;height:25px;"></div>
<div class="c" style="left:1495px;top:343px;width:64px;height:25px;"></div>
<div class="c" style="left:1559px;top:343px;width:64px;height:25px;"></div>
<div class="c" style="left:26px;top:368px;width:28px;height:20px;border-right-color:#000;border-bottom-color:#000;"><span style="left:3px;bottom:-2px">8</span></div>
<div class="c" style="left:54px;top:368px;width:407px;height:20px;border-right-color:#000;border-bottom-color:#000;"><span style="left:3px;letter-spacing:.17px;bottom:-2px">Колонки</span></div>
<div class="c" style="left:461px;top:368px;width:112px;height:20px;border-right-color:#000;border-bottom-color:#000;"></div>
<div class="c" style="left:573px;top:368px;width:96px;height:20px;border-right-color:#000;border-bottom-color:#000;"></div>
<div class="c" style="left:669px;top:368px;width:122px;height:20px;border-right-color:#000;border-bottom-color:#000;"></div>
<div class="c" style="left:791px;top:368px;width:64px;height:20px;"></div>
<div class="c" style="left:855px;top:368px;width:64px;height:20px;"></div>
<div class="c" style="left:919px;top:368px;width:64px;height:20px;"></div>
<div class="c" style="left:983px;top:368px;width:64px;height:20px;"></div>
<div class="c" style="left:1047px;top:368px;width:64px;height:20px;"></div>
<div class="c" style="left:1111px;top:368px;width:64px;height:20px;"></div>
<div class="c" style="left:1175px;top:368px;width:64px;height:20px;"></div>
<div class="c" style="left:1239px;top:368px;width:64px;height:20px;"></div>
<div class="c" style="left:1303px;top:368px;width:64px;height:20px;"></div>
<div class="c" style="left:1367px;top:368px;width:64px;height:20px;"></div>
<div class="c" style="left:1431px;top:368px;width:64px;height:20px;"></div>
<div class="c" style="left:1495px;top:368px;width:64px;height:20px;"></div>
<div class="c" style="left:1559px;top:368px;width:64px;height:20px;"></div>
<div class="c" style="left:26px;top:388px;width:28px;height:25px;border-right-color:#000;border-bottom-color:#000;"><span style="left:3px">9</span></div>
<div class="c" style="left:54px;top:388px;width:407px;height:25px;border-right-color:#000;border-bottom-color:#000;"><span style="left:3px;letter-spacing:.17px">Системный блок</span></div>
<div class="c" style="left:461px;top:388px;width:112px;height:25px;border-right-color:#000;border-bottom-color:#000;"></div>
<div class="c" style="left:573px;top:388px;width:96px;height:25px;border-right-color:#000;border-bottom-color:#000;"></div>
<div class="c" style="left:669px;top:388px;width:122px;height:25px;border-right-color:#000;border-bottom-color:#000;"></div>
<div class="c" style="left:791px;top:388px;width:64px;height:25px;"></div>
<div class="c" style="left:855px;top:388px;width:64px;height:25px;"></div>
<div class="c" style="left:919px;top:388px;width:64px;height:25px;"></div>
<div class="c" style="left:983px;top:388px;width:64px;height:25px;"></div>
<div class="c" style="left:1047px;top:388px;width:64px;height:25px;"></div>
<div class="c" style="left:1111px;top:388px;width:64px;height:25px;"></div>
<div class="c" style="left:1175px;top:388px;width:64px;height:25px;"></div>
<div class="c" style="left:1239px;top:388px;width:64px;height:25px;"></div>
<div class="c" style="left:1303px;top:388px;width:64px;height:25px;"></div>
<div class="c" style="left:1367px;top:388px;width:64px;height:25px;"></div>
<div class="c" style="left:1431px;top:388px;width:64px;height:25px;"></div>
<div class="c" style="left:1495px;top:388px;width:64px;height:25px;"></div>
<div class="c" style="left:1559px;top:388px;width:64px;height:25px;"></div>
<div class="c" style="left:26px;top:413px;width:28px;height:26px;border-right-color:#000;border-bottom-color:#000;"><span style="left:3px;bottom:2px">10</span></div>
<div class="c" style="left:54px;top:413px;width:407px;height:26px;border-right-color:#000;border-bottom-color:#000;"><span style="left:3px;letter-spacing:.17px;bottom:2px">МФУ</span></div>
<div class="c" style="left:461px;top:413px;width:112px;height:26px;border-right-color:#000;border-bottom-color:#000;"></div>
<div class="c" style="left:573px;top:413px;width:96px;height:26px;border-right-color:#000;border-bottom-color:#000;"></div>
<div class="c" style="left:669px;top:413px;width:122px;height:26px;border-right-color:#000;border-bottom-color:#000;"></div>
<div class="c" style="left:791px;top:413px;width:64px;height:26px;"></div>
<div class="c" style="left:855px;top:413px;width:64px;height:26px;"></div>
<div class="c" style="left:919px;top:413px;width:64px;height:26px;"></div>
<div class="c" style="left:983px;top:413px;width:64px;height:26px;"></div>
<div class="c" style="left:1047px;top:413px;width:64px;height:26px;"></div>
<div class="c" style="left:1111px;top:413px;width:64px;height:26px;"></div>
<div class="c" style="left:1175px;top:413px;width:64px;height:26px;"></div>
<div class="c" style="left:1239px;top:413px;width:64px;height:26px;"></div>
<div class="c" style="left:1303px;top:413px;width:64px;height:26px;"></div>
<div class="c" style="left:1367px;top:413px;width:64px;height:26px;"></div>
<div class="c" style="left:1431px;top:413px;width:64px;height:26px;"></div>
<div class="c" style="left:1495px;top:413px;width:64px;height:26px;"></div>
<div class="c" style="left:1559px;top:413px;width:64px;height:26px;"></div>
<div class="c" style="left:26px;top:439px;width:28px;height:26px;border-right-color:#000;border-bottom-color:#000;"></div>
<div class="c" style="left:54px;top:439px;width:407px;height:26px;border-right-color:#000;border-bottom-color:#000;"><span style="right:3px;font-weight:bold;letter-spacing:.34px;bottom:2px">Итог офисная техника</span></div>
<div class="c" style="left:461px;top:439px;width:112px;height:26px;border-right-color:#000;border-bottom-color:#000;"></div>
<div class="c" style="left:573px;top:439px;width:96px;height:26px;border-right-color:#000;border-bottom-color:#000;"></div>
<div class="c" style="left:669px;top:439px;width:122px;height:26px;border-right-color:#000;border-bottom-color:#000;"><span style="left:3px;bottom:2px">189</span></div>
<div class="c" style="left:791px;top:439px;width:64px;height:26px;"></div>
<div class="c" style="left:855px;top:439px;width:64px;height:26px;"></div>
<div class="c" style="left:919px;top:439px;width:64px;height:26px;"></div>
<div class="c" style="left:983px;top:439px;width:64px;height:26px;"></div>
<div class="c" style="left:1047px;top:439px;width:64px;height:26px;"></div>
<div class="c" style="left:1111px;top:439px;width:64px;height:26px;"></div>
<div class="c" style="left:1175px;top:439px;width:64px;height:26px;"></div>
<div class="c" style="left:1239px;top:439px;width:64px;height:26px;"></div>
<div class="c" style="left:1303px;top:439px;width:64px;height:26px;"></div>
<div class="c" style="left:1367px;top:439px;width:64px;height:26px;"></div>
<div class="c" style="left:1431px;top:439px;width:64px;height:26px;"></div>
<div class="c" style="left:1495px;top:439px;width:64px;height:26px;"></div>
<div class="c" style="left:1559px;top:439px;width:64px;height:26px;"></div>
<div class="c" style="left:26px;top:465px;width:765px;height:30px;border-right-color:#000;border-bottom-color:#000;"><span style="left:0;right:0;text-align:center;font-weight:bold;letter-spacing:.34px;bottom:4px">Канцелярия</span></div>
<div class="c" style="left:791px;top:465px;width:64px;height:30px;"></div>
<div class="c" style="left:855px;top:465px;width:64px;height:30px;"></div>
<div class="c" style="left:919px;top:465px;width:64px;height:30px;"></div>
<div class="c" style="left:983px;top:465px;width:64px;height:30px;"></div>
<div class="c" style="left:1047px;top:465px;width:64px;height:30px;"></div>
<div class="c" style="left:1111px;top:465px;width:64px;height:30px;"></div>
<div class="c" style="left:1175px;top:465px;width:64px;height:30px;"></div>
<div class="c" style="left:1239px;top:465px;width:64px;height:30px;"></div>
<div class="c" style="left:1303px;top:465px;width:64px;height:30px;"></div>
<div class="c" style="left:1367px;top:465px;width:64px;height:30px;"></div>
<div class="c" style="left:1431px;top:465px;width:64px;height:30px;"></div>
<div class="c" style="left:1495px;top:465px;width:64px;height:30px;"></div>
<div class="c" style="left:1559px;top:465px;width:64px;height:30px;"></div>
<div class="c" style="left:26px;top:495px;width:28px;height:25px;border-right-color:#000;border-bottom-color:#000;"><span style="left:3px">13</span></div>
<div class="c" style="left:54px;top:495px;width:407px;height:25px;border-right-color:#000;border-bottom-color:#000;"><span style="left:3px;letter-spacing:.17px">Ручка</span></div>
<div class="c" style="left:461px;top:495px;width:112px;height:25px;border-right-color:#000;border-bottom-color:#000;"></div>
<div class="c" style="left:573px;top:495px;width:96px;height:25px;border-right-color:#000;border-bottom-color:#000;"></div>
<div class="c" style="left:669px;top:495px;width:122px;height:25px;border-right-color:#000;border-bottom-color:#000;"></div>
<div class="c" style="left:791px;top:495px;width:64px;height:25px;"></div>
<div class="c" style="left:855px;top:495px;width:64px;height:25px;"></div>
<div class="c" style="left:919px;top:495px;width:64px;height:25px;"></div>
<div class="c" style="left:983px;top:495px;width:64px;height:25px;"></div>
<div class="c" style="left:1047px;top:495px;width:64px;height:25px;"></div>
<div class="c" style="left:1111px;top:495px;width:64px;height:25px;"></div>
<div class="c" style="left:1175px;top:495px;width:64px;height:25px;"></div>
<div class="c" style="left:1239px;top:495px;width:64px;height:25px;"></div>
<div class="c" style="left:1303px;top:495px;width:64px;height:25px;"></div>
<div class="c" style="left:1367px;top:495px;width:64px;height:25px;"></div>
<div class="c" style="left:1431px;top:495px;width:64px;height:25px;"></div>
<div class="c" style="left:1495px;top:495px;width:64px;height:25px;"></div>
<div class="c" style="left:1559px;top:495px;width:64px;height:25px;"></div>
<div class="c" style="left:26px;top:520px;width:28px;height:25px;border-right-color:#000;border-bottom-color:#000;"><span style="left:3px">14</span></div>
<div class="c" style="left:54px;top:520px;width:407px;height:25px;border-right-color:#000;border-bottom-color:#000;"><span style="left:3px;letter-spacing:.17px">Карандаш</span></div>
<div class="c" style="left:461px;top:520px;width:112px;height:25px;border-right-color:#000;border-bottom-color:#000;"></div>
<div class="c" style="left:573px;top:520px;width:96px;height:25px;border-right-color:#000;border-bottom-color:#000;"></div>
<div class="c" style="left:669px;top:520px;width:122px;height:25px;border-right-color:#000;border-bottom-color:#000;"></div>
<div class="c" style="left:791px;top:520px;width:64px;height:25px;"></div>
<div class="c" style="left:855px;top:520px;width:64px;height:25px;"></div>
<div class="c" style="left:919px;top:520px;width:64px;height:25px;"></div>
<div class="c" style="left:983px;top:520px;width:64px;height:25px;"></div>
<div class="c" style="left:1047px;top:520px;width:64px;height:25px;"></div>
<div class="c" style="left:1111px;top:520px;width:64px;height:25px;"></div>
<div class="c" style="left:1175px;top:520px;width:64px;height:25px;"></div>
<div class="c" style="left:1239px;top:520px;width:64px;height:25px;"></div>
<div class="c" style="left:1303px;top:520px;width:64px;height:25px;"></div>
<div class="c" style="left:1367px;top:520px;width:64px;height:25px;"></div>
<div class="c" style="left:1431px;top:520px;width:64px;height:25px;"></div>
<div class="c" style="left:1495px;top:520px;width:64px;height:25px;"></div>
<div class="c" style="left:1559px;top:520px;width:64px;height:25px;"></div>
<div class="c" style="left:26px;top:545px;width:28px;height:25px;border-right-color:#000;border-bottom-color:#000;"><span style="left:3px">15</span></div>
<div class="c" style="left:54px;top:545px;width:407px;height:25px;border-right-color:#000;border-bottom-color:#000;"><span style="left:3px;letter-spacing:.17px">Степлер</span></div>
<div class="c" style="left:461px;top:545px;width:112px;height:25px;border-right-color:#000;border-bottom-color:#000;"></div>
<div class="c" style="left:573px;top:545px;width:96px;height:25px;border-right-color:#000;border-bottom-color:#000;"></div>
<div class="c" style="left:669px;top:545px;width:122px;height:25px;border-right-color:#000;border-bottom-color:#000;"></div>
<div class="c" style="left:791px;top:545px;width:64px;height:25px;"></div>
<div class="c" style="left:855px;top:545px;width:64px;height:25px;"></div>
<div class="c" style="left:919px;top:545px;width:64px;height:25px;"></div>
<div class="c" style="left:983px;top:545px;width:64px;height:25px;"></div>
<div class="c" style="left:1047px;top:545px;width:64px;height:25px;"></div>
<div class="c" style="left:1111px;top:545px;width:64px;height:25px;"></div>
<div class="c" style="left:1175px;top:545px;width:64px;height:25px;"></div>
<div class="c" style="left:1239px;top:545px;width:64px;height:25px;"></div>
<div class="c" style="left:1303px;top:545px;width:64px;height:25px;"></div>
<div class="c" style="left:1367px;top:545px;width:64px;height:25px;"></div>
<div class="c" style="left:1431px;top:545px;width:64px;height:25px;"></div>
<div class="c" style="left:1495px;top:545px;width:64px;height:25px;"></div>
<div class="c" style="left:1559px;top:545px;width:64px;height:25px;"></div>
<div class="c" style="left:26px;top:570px;width:28px;height:25px;border-right-color:#000;border-bottom-color:#000;"><span style="left:3px">16</span></div>
<div class="c" style="left:54px;top:570px;width:407px;height:25px;border-right-color:#000;border-bottom-color:#000;"><span style="left:3px;letter-spacing:.17px">Ластик</span></div>
<div class="c" style="left:461px;top:570px;width:112px;height:25px;border-right-color:#000;border-bottom-color:#000;"></div>
<div class="c" style="left:573px;top:570px;width:96px;height:25px;border-right-color:#000;border-bottom-color:#000;"></div>
<div class="c" style="left:669px;top:570px;width:122px;height:25px;border-right-color:#000;border-bottom-color:#000;"></div>
<div class="c" style="left:791px;top:570px;width:64px;height:25px;"></div>
<div class="c" style="left:855px;top:570px;width:64px;height:25px;"></div>
<div class="c" style="left:919px;top:570px;width:64px;height:25px;"></div>
<div class="c" style="left:983px;top:570px;width:64px;height:25px;"></div>
<div class="c" style="left:1047px;top:570px;width:64px;height:25px;"></div>
<div class="c" style="left:1111px;top:570px;width:64px;height:25px;"></div>
<div class="c" style="left:1175px;top:570px;width:64px;height:25px;"></div>
<div class="c" style="left:1239px;top:570px;width:64px;height:25px;"></div>
<div class="c" style="left:1303px;top:570px;width:64px;height:25px;"></div>
<div class="c" style="left:1367px;top:570px;width:64px;height:25px;"></div>
<div class="c" style="left:1431px;top:570px;width:64px;height:25px;"></div>
<div class="c" style="left:1495px;top:570px;width:64px;height:25px;"></div>
<div class="c" style="left:1559px;top:570px;width:64px;height:25px;"></div>
<div class="c" style="left:26px;top:595px;width:28px;height:25px;border-right-color:#000;border-bottom-color:#000;"><span style="left:3px">17</span></div>
<div class="c" style="left:54px;top:595px;width:407px;height:25px;border-right-color:#000;border-bottom-color:#000;"><span style="left:3px;letter-spacing:.17px">Корректор</span></div>
<div class="c" style="left:461px;top:595px;width:112px;height:25px;border-right-color:#000;border-bottom-color:#000;"></div>
<div class="c" style="left:573px;top:595px;width:96px;height:25px;border-right-color:#000;border-bottom-color:#000;"></div>
<div class="c" style="left:669px;top:595px;width:122px;height:25px;border-right-color:#000;border-bottom-color:#000;"></div>
<div class="c" style="left:791px;top:595px;width:64px;height:25px;"></div>
<div class="c" style="left:855px;top:595px;width:64px;height:25px;"></div>
<div class="c" style="left:919px;top:595px;width:64px;height:25px;"></div>
<div class="c" style="left:983px;top:595px;width:64px;height:25px;"></div>
<div class="c" style="left:1047px;top:595px;width:64px;height:25px;"></div>
<div class="c" style="left:1111px;top:595px;width:64px;height:25px;"></div>
<div class="c" style="left:1175px;top:595px;width:64px;height:25px;"></div>
<div class="c" style="left:1239px;top:595px;width:64px;height:25px;"></div>
<div class="c" style="left:1303px;top:595px;width:64px;height:25px;"></div>
<div class="c" style="left:1367px;top:595px;width:64px;height:25px;"></div>
<div class="c" style="left:1431px;top:595px;width:64px;height:25px;"></div>
<div class="c" style="left:1495px;top:595px;width:64px;height:25px;"></div>
<div class="c" style="left:1559px;top:595px;width:64px;height:25px;"></div>
<div class="c" style="left:26px;top:620px;width:28px;height:25px;border-right-color:#000;border-bottom-color:#000;"><span style="left:3px">18</span></div>
<div class="c" style="left:54px;top:620px;width:407px;height:25px;border-right-color:#000;border-bottom-color:#000;"><span style="left:3px;letter-spacing:.17px">Папки для хранения бумаг</span></div>
<div class="c" style="left:461px;top:620px;width:112px;height:25px;border-right-color:#000;border-bottom-color:#000;"></div>
<div class="c" style="left:573px;top:620px;width:96px;height:25px;border-right-color:#000;border-bottom-color:#000;"></div>
<div class="c" style="left:669px;top:620px;width:122px;height:25px;border-right-color:#000;border-bottom-color:#000;"></div>
<div class="c" style="left:791px;top:620px;width:64px;height:25px;"></div>
<div class="c" style="left:855px;top:620px;width:64px;height:25px;"></div>
<div class="c" style="left:919px;top:620px;width:64px;height:25px;"></div>
<div class="c" style="left:983px;top:620px;width:64px;height:25px;"></div>
<div class="c" style="left:1047px;top:620px;width:64px;height:25px;"></div>
<div class="c" style="left:1111px;top:620px;width:64px;height:25px;"></div>
<div class="c" style="left:1175px;top:620px;width:64px;height:25px;"></div>
<div class="c" style="left:1239px;top:620px;width:64px;height:25px;"></div>
<div class="c" style="left:1303px;top:620px;width:64px;height:25px;"></div>
<div class="c" style="left:1367px;top:620px;width:64px;height:25px;"></div>
<div class="c" style="left:1431px;top:620px;width:64px;height:25px;"></div>
<div class="c" style="left:1495px;top:620px;width:64px;height:25px;"></div>
<div class="c" style="left:1559px;top:620px;width:64px;height:25px;"></div>
<div class="c" style="left:26px;top:645px;width:28px;height:26px;border-right-color:#000;border-bottom-color:#000;"><span style="left:3px;bottom:2px">10</span></div>
<div class="c" style="left:54px;top:645px;width:407px;height:26px;border-right-color:#000;border-bottom-color:#000;"><span style="left:3px;letter-spacing:.17px;bottom:2px">Бумага</span></div>
<div class="c" style="left:461px;top:645px;width:112px;height:26px;border-right-color:#000;border-bottom-color:#000;"></div>
<div class="c" style="left:573px;top:645px;width:96px;height:26px;border-right-color:#000;border-bottom-color:#000;"></div>
<div class="c" style="left:669px;top:645px;width:122px;height:26px;border-right-color:#000;border-bottom-color:#000;"></div>
<div class="c" style="left:791px;top:645px;width:64px;height:26px;"></div>
<div class="c" style="left:855px;top:645px;width:64px;height:26px;"></div>
<div class="c" style="left:919px;top:645px;width:64px;height:26px;"></div>
<div class="c" style="left:983px;top:645px;width:64px;height:26px;"></div>
<div class="c" style="left:1047px;top:645px;width:64px;height:26px;"></div>
<div class="c" style="left:1111px;top:645px;width:64px;height:26px;"></div>
<div class="c" style="left:1175px;top:645px;width:64px;height:26px;"></div>
<div class="c" style="left:1239px;top:645px;width:64px;height:26px;"></div>
<div class="c" style="left:1303px;top:645px;width:64px;height:26px;"></div>
<div class="c" style="left:1367px;top:645px;width:64px;height:26px;"></div>
<div class="c" style="left:1431px;top:645px;width:64px;height:26px;"></div>
<div class="c" style="left:1495px;top:645px;width:64px;height:26px;"></div>
<div class="c" style="left:1559px;top:645px;width:64px;height:26px;"></div>
<div class="c" style="left:26px;top:671px;width:28px;height:26px;border-right-color:#000;border-bottom-color:#000;"></div>
<div class="c" style="left:54px;top:671px;width:407px;height:26px;border-right-color:#000;border-bottom-color:#000;"><span style="right:3px;font-weight:bold;letter-spacing:.34px;bottom:2px">Итог канцелярия</span></div>
<div class="c" style="left:461px;top:671px;width:112px;height:26px;border-right-color:#000;border-bottom-color:#000;"></div>
<div class="c" style="left:573px;top:671px;width:96px;height:26px;border-right-color:#000;border-bottom-color:#000;"></div>
<div class="c" style="left:669px;top:671px;width:122px;height:26px;border-right-color:#000;border-bottom-color:#000;"><span style="left:3px;bottom:2px">55</span></div>
<div class="c" style="left:791px;top:671px;width:64px;height:26px;"></div>
<div class="c" style="left:855px;top:671px;width:64px;height:26px;"></div>
<div class="c" style="left:919px;top:671px;width:64px;height:26px;"></div>
<div class="c" style="left:983px;top:671px;width:64px;height:26px;"></div>
<div class="c" style="left:1047px;top:671px;width:64px;height:26px;"></div>
<div class="c" style="left:1111px;top:671px;width:64px;height:26px;"></div>
<div class="c" style="left:1175px;top:671px;width:64px;height:26px;"></div>
<div class="c" style="left:1239px;top:671px;width:64px;height:26px;"></div>
<div class="c" style="left:1303px;top:671px;width:64px;height:26px;"></div>
<div class="c" style="left:1367px;top:671px;width:64px;height:26px;"></div>
<div class="c" style="left:1431px;top:671px;width:64px;height:26px;"></div>
<div class="c" style="left:1495px;top:671px;width:64px;height:26px;"></div>
<div class="c" style="left:1559px;top:671px;width:64px;height:26px;"></div>
<div class="c" style="left:26px;top:697px;width:28px;height:26px;border-right-color:#000;border-bottom-color:#000;"></div>
<div class="c" style="left:54px;top:697px;width:407px;height:26px;border-right-color:#000;border-bottom-color:#000;"><span style="right:3px;font-weight:bold;letter-spacing:.34px;bottom:2px">ИТОГО</span></div>
<div class="c" style="left:461px;top:697px;width:112px;height:26px;border-right-color:#000;border-bottom-color:#000;"></div>
<div class="c" style="left:573px;top:697px;width:96px;height:26px;border-right-color:#000;border-bottom-color:#000;"></div>
<div class="c" style="left:669px;top:697px;width:122px;height:26px;border-right-color:#000;border-bottom-color:#000;"></div>
<div class="c" style="left:791px;top:697px;width:64px;height:26px;"></div>
<div class="c" style="left:855px;top:697px;width:64px;height:26px;"></div>
<div class="c" style="left:919px;top:697px;width:64px;height:26px;"></div>
<div class="c" style="left:983px;top:697px;width:64px;height:26px;"></div>
<div class="c" style="left:1047px;top:697px;width:64px;height:26px;"></div>
<div class="c" style="left:1111px;top:697px;width:64px;height:26px;"></div>
<div class="c" style="left:1175px;top:697px;width:64px;height:26px;"></div>
<div class="c" style="left:1239px;top:697px;width:64px;height:26px;"></div>
<div class="c" style="left:1303px;top:697px;width:64px;height:26px;"></div>
<div class="c" style="left:1367px;top:697px;width:64px;height:26px;"></div>
<div class="c" style="left:1431px;top:697px;width:64px;height:26px;"></div>
<div class="c" style="left:1495px;top:697px;width:64px;height:26px;"></div>
<div class="c" style="left:1559px;top:697px;width:64px;height:26px;"></div>
<div class="c" style="left:26px;top:723px;width:28px;height:20px;"></div>
<div class="c" style="left:54px;top:723px;width:407px;height:20px;"></div>
<div class="c" style="left:461px;top:723px;width:112px;height:20px;"></div>
<div class="c" style="left:573px;top:723px;width:96px;height:20px;"></div>
<div class="c" style="left:669px;top:723px;width:122px;height:20px;"></div>
<div class="c" style="left:791px;top:723px;width:64px;height:20px;"></div>
<div class="c" style="left:855px;top:723px;width:64px;height:20px;"></div>
<div class="c" style="left:919px;top:723px;width:64px;height:20px;"></div>
<div class="c" style="left:983px;top:723px;width:64px;height:20px;"></div>
<div class="c" style="left:1047px;top:723px;width:64px;height:20px;"></div>
<div class="c" style="left:1111px;top:723px;width:64px;height:20px;"></div>
<div class="c" style="left:1175px;top:723px;width:64px;height:20px;"></div>
<div class="c" style="left:1239px;top:723px;width:64px;height:20px;"></div>
<div class="c" style="left:1303px;top:723px;width:64px;height:20px;"></div>
<div class="c" style="left:1367px;top:723px;width:64px;height:20px;"></div>
<div class="c" style="left:1431px;top:723px;width:64px;height:20px;"></div>
<div class="c" style="left:1495px;top:723px;width:64px;height:20px;"></div>
<div class="c" style="left:1559px;top:723px;width:64px;height:20px;"></div>
<div class="c" style="left:26px;top:743px;width:28px;height:20px;"></div>
<div class="c" style="left:54px;top:743px;width:407px;height:20px;"></div>
<div class="c" style="left:461px;top:743px;width:112px;height:20px;"></div>
<div class="c" style="left:573px;top:743px;width:96px;height:20px;"></div>
<div class="c" style="left:669px;top:743px;width:122px;height:20px;"></div>
<div class="c" style="left:791px;top:743px;width:64px;height:20px;"></div>
<div class="c" style="left:855px;top:743px;width:64px;height:20px;"></div>
<div class="c" style="left:919px;top:743px;width:64px;height:20px;"></div>
<div class="c" style="left:983px;top:743px;width:64px;height:20px;"></div>
<div class="c" style="left:1047px;top:743px;width:64px;height:20px;"></div>
<div class="c" style="left:1111px;top:743px;width:64px;height:20px;"></div>
<div class="c" style="left:1175px;top:743px;width:64px;height:20px;"></div>
<div class="c" style="left:1239px;top:743px;width:64px;height:20px;"></div>
<div class="c" style="left:1303px;top:743px;width:64px;height:20px;"></div>
<div class="c" style="left:1367px;top:743px;width:64px;height:20px;"></div>
<div class="c" style="left:1431px;top:743px;width:64px;height:20px;"></div>
<div class="c" style="left:1495px;top:743px;width:64px;height:20px;"></div>
<div class="c" style="left:1559px;top:743px;width:64px;height:20px;"></div>
<div class="c" style="left:26px;top:763px;width:28px;height:25px;"></div>
<div class="c" style="left:54px;top:763px;width:737px;height:25px;"></div>
<div class="c" style="left:791px;top:763px;width:64px;height:25px;"></div>
<div class="c" style="left:855px;top:763px;width:64px;height:25px;"></div>
<div class="c" style="left:919px;top:763px;width:64px;height:25px;"></div>
<div class="c" style="left:983px;top:763px;width:64px;height:25px;"></div>
<div class="c" style="left:1047px;top:763px;width:64px;height:25px;"></div>
<div class="c" style="left:1111px;top:763px;width:64px;height:25px;"></div>
<div class="c" style="left:1175px;top:763px;width:64px;height:25px;"></div>
<div class="c" style="left:1239px;top:763px;width:64px;height:25px;"></div>
<div class="c" style="left:1303px;top:763px;width:64px;height:25px;"></div>
<div class="c" style="left:1367px;top:763px;width:64px;height:25px;"></div>
<div class="c" style="left:1431px;top:763px;width:64px;height:25px;"></div>
<div class="c" style="left:1495px;top:763px;width:64px;height:25px;"></div>
<div class="c" style="left:1559px;top:763px;width:64px;height:25px;"></div>
<div class="c" style="left:26px;top:788px;width:28px;height:25px;"></div>
<div class="c" style="left:54px;top:788px;width:407px;height:25px;"></div>
<div class="c" style="left:461px;top:788px;width:112px;height:25px;"></div>
<div class="c" style="left:573px;top:788px;width:96px;height:25px;"></div>
<div class="c" style="left:669px;top:788px;width:122px;height:25px;"></div>
<div class="c" style="left:791px;top:788px;width:64px;height:25px;"></div>
<div class="c" style="left:855px;top:788px;width:64px;height:25px;"></div>
<div class="c" style="left:919px;top:788px;width:64px;height:25px;"></div>
<div class="c" style="left:983px;top:788px;width:64px;height:25px;"></div>
<div class="c" style="left:1047px;top:788px;width:64px;height:25px;"></div>
<div class="c" style="left:1111px;top:788px;width:64px;height:25px;"></div>
<div class="c" style="left:1175px;top:788px;width:64px;height:25px;"></div>
<div class="c" style="left:1239px;top:788px;width:64px;height:25px;"></div>
<div class="c" style="left:1303px;top:788px;width:64px;height:25px;"></div>
<div class="c" style="left:1367px;top:788px;width:64px;height:25px;"></div>
<div class="c" style="left:1431px;top:788px;width:64px;height:25px;"></div>
<div class="c" style="left:1495px;top:788px;width:64px;height:25px;"></div>
<div class="c" style="left:1559px;top:788px;width:64px;height:25px;"></div>
<div class="abs" style="left:667px;top:216px;width:124px;height:28px;border:2px solid #000"></div>
<div class="abs" style="left:667px;top:437px;width:124px;height:28px;border:2px solid #000"></div>
<div class="abs" style="left:667px;top:669px;width:124px;height:28px;border:2px solid #000"></div>
<div class="abs" style="left:1578px;top:19px;width:1px;height:776px;background:#9e9e9e"></div>
<div class="abs" style="left:1237px;top:618px;width:67px;height:28px;border:2px solid #217346"></div>
<div class="abs" style="left:1299px;top:641px;width:6px;height:6px;background:#217346;border:1px solid #fff;border-right:0;border-bottom:0"></div>
<!--CHART-->
</div>
<div class="abs" style="left:873.00px;top:334.00px;width:514.00px;height:379.00px;background:#fff;border:1px solid #d9d9d9;"></div>
<span class="t" style="left:948.50px;top:351px;font-size:16.00px;color:#595959;font-weight:bold;transform-origin:0 0;transform:scaleX(0.9961);">Основные статьи расходов для оснащение офиса</span>
<div class="abs" style="left:911.00px;top:681.00px;width:461.00px;height:1.00px;background:#d9d9d9;"></div>
<span class="t" style="left:893.15px;top:676px;font-size:10.00px;color:#595959;transform-origin:0 0;transform:scaleX(1.1417);">0</span>
<div class="abs" style="left:911.00px;top:651.00px;width:461.00px;height:1.00px;background:#d9d9d9;"></div>
<span class="t" style="left:887.30px;top:646px;font-size:10.00px;color:#595959;transform-origin:0 0;transform:scaleX(1.0968);">20</span>
<div class="abs" style="left:911.00px;top:621.00px;width:461.00px;height:1.00px;background:#d9d9d9;"></div>
<span class="t" style="left:887.30px;top:616px;font-size:10.00px;color:#595959;transform-origin:0 0;transform:scaleX(1.0968);">40</span>
<div class="abs" style="left:911.00px;top:591.00px;width:461.00px;height:1.00px;background:#d9d9d9;"></div>
<span class="t" style="left:887.30px;top:586px;font-size:10.00px;color:#595959;transform-origin:0 0;transform:scaleX(1.0968);">60</span>
<div class="abs" style="left:911.00px;top:561.00px;width:461.00px;height:1.00px;background:#d9d9d9;"></div>
<span class="t" style="left:887.30px;top:556px;font-size:10.00px;color:#595959;transform-origin:0 0;transform:scaleX(1.0968);">80</span>
<div class="abs" style="left:911.00px;top:532.00px;width:461.00px;height:1.00px;background:#d9d9d9;"></div>
<span class="t" style="left:881.45px;top:527px;font-size:10.00px;color:#595959;transform-origin:0 0;transform:scaleX(1.0818);">100</span>
<div class="abs" style="left:911.00px;top:502.00px;width:461.00px;height:1.00px;background:#d9d9d9;"></div>
<span class="t" style="left:881.45px;top:497px;font-size:10.00px;color:#595959;transform-origin:0 0;transform:scaleX(1.0818);">120</span>
<div class="abs" style="left:911.00px;top:472.00px;width:461.00px;height:1.00px;background:#d9d9d9;"></div>
<span class="t" style="left:881.45px;top:467px;font-size:10.00px;color:#595959;transform-origin:0 0;transform:scaleX(1.0818);">140</span>
<div class="abs" style="left:911.00px;top:442.00px;width:461.00px;height:1.00px;background:#d9d9d9;"></div>
<span class="t" style="left:881.45px;top:437px;font-size:10.00px;color:#595959;transform-origin:0 0;transform:scaleX(1.0818);">160</span>
<div class="abs" style="left:911.00px;top:413.00px;width:461.00px;height:1.00px;background:#d9d9d9;"></div>
<span class="t" style="left:881.45px;top:408px;font-size:10.00px;color:#595959;transform-origin:0 0;transform:scaleX(1.0818);">180</span>
<div class="abs" style="left:911.00px;top:383.00px;width:461.00px;height:1.00px;background:#d9d9d9;"></div>
<span class="t" style="left:881.45px;top:378px;font-size:10.00px;color:#595959;transform-origin:0 0;transform:scaleX(1.0818);">200</span>
<div class="abs" style="left:964.00px;top:501.00px;width:48.00px;height:180.00px;background:#5b9bd5;"></div>
<div class="abs" style="left:1117.00px;top:400.00px;width:48.00px;height:281.00px;background:#5b9bd5;"></div>
<div class="abs" style="left:1271.00px;top:599.00px;width:48.00px;height:82.00px;background:#5b9bd5;"></div>
<span class="t" style="left:954.60px;top:691px;font-size:10.60px;color:#595959;font-weight:bold;transform-origin:0 0;transform:scaleX(1.0153);">Итог мебель</span>
<span class="t" style="left:1083.10px;top:691px;font-size:10.60px;color:#595959;font-weight:bold;transform-origin:0 0;transform:scaleX(0.9893);">Итог офисная техника</span>
<span class="t" style="left:1250.10px;top:691px;font-size:10.60px;color:#595959;font-weight:bold;transform-origin:0 0;transform:scaleX(1.0021);">Итог канцелярия</span>
<div id="pane"></div>
<div class="abs" style="left:1600.00px;top:197.00px;width:1.00px;height:819.00px;background:#c6c6c6;"></div>
<div class="abs" style="left:1579.00px;top:197.00px;width:21.00px;height:794.00px;background:#e6e6e6;"></div>
<div class="abs" style="left:1582.00px;top:198.00px;width:15.00px;height:15.00px;background:#fff;border:1px solid #ababab;"></div>
<svg class="abs" style="left:1586.00px;top:203.00px" width="7" height="4" viewBox="0 0 7 4"><polygon points="0,4 7,4 3.5,0" fill="#777"/></svg>
<div class="abs" style="left:1582.00px;top:214.00px;width:15.00px;height:737.00px;background:#fff;border:1px solid #ababab;"></div>
<div class="abs" style="left:1582.00px;top:951.00px;width:15.00px;height:25.00px;background:#dadada;"></div>
<div class="abs" style="left:1582.00px;top:976.00px;width:15.00px;height:15.00px;background:#fff;border:1px solid #d0d0d0;"></div>
<svg class="abs" style="left:1586.00px;top:982.00px" width="7" height="4" viewBox="0 0 7 4"><polygon points="0,0 7,0 3.5,4" fill="#777"/></svg>
<span class="t" style="left:1614.10px;top:213px;font-size:20.70px;color:#217346;transform-origin:0 0;transform:scaleX(0.9741);-webkit-text-stroke:.5px #e6e6e6;">Формат фигуры</span>
<svg class="abs" style="left:1880.00px;top:217.00px" width="9" height="5" viewBox="0 0 9 5"><polygon points="0,0 9,0 4.5,5" fill="#666"/></svg>
<svg class="abs" style="left:1897.00px;top:214.00px" width="11" height="11" viewBox="0 0 11 11"><path d="M1,1 L10,10 M10,1 L1,10" stroke="#555" stroke-width="1.8"/></svg>
<svg class="abs" style="left:1619.00px;top:238.00px" width="26" height="24" viewBox="0 0 26 24"><path d="M10,5 L20,15 L11,22.5 L2,14 Z" fill="#fff" stroke="#217346" stroke-width="1.5"/><path d="M8.5,8 V3.5 A2.3,2.3 0 0 1 13,3.5 V11" fill="none" stroke="#217346" stroke-width="1.3"/><circle cx="13" cy="11.5" r="1.5" fill="#217346"/><path d="M19.5,9 C24,11.5 25,16 22.5,21 C22.5,17.5 21.5,15.5 18.5,14 Z" fill="#217346"/></svg>
<svg class="abs" style="left:1660.00px;top:238.00px" width="22" height="24" viewBox="0 0 22 24"><path d="M11,1.5 L20.5,8.5 L17,19 H5 L1.5,8.5 Z" fill="#fff" stroke="#666" stroke-width="1.4"/><path d="M5,20 L3.5,23.5 M17,20 L18.5,23.5 M5,21.5 H17" stroke="#bbb" stroke-width="1.1" fill="none"/></svg>
<svg class="abs" style="left:1700.00px;top:239.00px" width="23" height="23" viewBox="0 0 23 23"><rect x="6" y="6.5" width="15.5" height="15.5" fill="#666"/><path d="M6,2 H21.5 M6,0 V4 M21.5,0 V4 M2,6.5 V22 M0,6.5 H4 M0,22 H4" stroke="#666" stroke-width="1.1" fill="none"/><path d="M13.75,9 V19.5 M8.5,14.25 H19 M12,10.8 L13.75,9 L15.5,10.8 M12,17.7 L13.75,19.5 L15.5,17.7 M10.3,12.5 L8.5,14.25 L10.3,16 M17.2,12.5 L19,14.25 L17.2,16" fill="none" stroke="#fff" stroke-width="1.1"/></svg>
<svg class="abs" style="left:1614.00px;top:272.00px" width="294" height="10" viewBox="0 0 294 10"><path d="M0,8.5 H11 L17,2.5 L23,8.5 H293" fill="none" stroke="#c8c8c8" stroke-width="1"/></svg>
<svg class="abs" style="left:1622.00px;top:290.00px" width="7" height="10" viewBox="0 0 7 10"><path d="M1,.8 L5.5,5 L1,9.2 Z" fill="#e6e6e6" stroke="#666" stroke-width="1"/></svg>
<span class="t" style="left:1635.60px;top:290px;font-size:12.30px;color:#444;font-weight:bold;transform-origin:0 0;transform:scaleX(0.9667);">Заливка</span>
<svg class="abs" style="left:1621.50px;top:317.00px" width="7" height="7" viewBox="0 0 7 7"><polygon points="6.5,0 6.5,6.5 0,6.5" fill="#444"/></svg>
<span class="t" style="left:1635.60px;top:316px;font-size:12.30px;color:#217346;font-weight:bold;transform-origin:0 0;transform:scaleX(1.0193);">Линия</span>
<svg class="abs" style="left:1636.70px;top:344.00px" width="12" height="12" viewBox="0 0 12 12"><circle cx="6" cy="6" r="5" fill="#fff" stroke="#dcdcdc" stroke-width="1"/><circle cx="6" cy="6" r="2.6" fill="#c0c0c0"/></svg>
<span class="t" style="left:1653.60px;top:345px;font-size:12.30px;color:#b2b2b2;transform-origin:0 0;transform:scaleX(0.9924);">Нет линий</span>
<div class="abs" style="left:1654.00px;top:356.00px;width:8.44px;height:1.00px;background:#b2b2b2;"></div>
<svg class="abs" style="left:1636.70px;top:366.30px" width="12" height="12" viewBox="0 0 12 12"><circle cx="6" cy="6" r="5" fill="#fff" stroke="#dcdcdc" stroke-width="1"/></svg>
<span class="t" style="left:1653.60px;top:367px;font-size:12.30px;color:#b2b2b2;transform-origin:0 0;transform:scaleX(0.9841);">Сплошная линия</span>
<div class="abs" style="left:1654.00px;top:378.30px;width:8.44px;height:1.00px;background:#b2b2b2;"></div>
<svg class="abs" style="left:1636.70px;top:388.00px" width="12" height="12" viewBox="0 0 12 12"><circle cx="6" cy="6" r="5" fill="#fff" stroke="#dcdcdc" stroke-width="1"/></svg>
<span class="t" style="left:1653.60px;top:389px;font-size:12.30px;color:#b2b2b2;transform-origin:0 0;transform:scaleX(0.9554);">Градиентная линия</span>
<div class="abs" style="left:1654.00px;top:400.00px;width:6.33px;height:1.00px;background:#b2b2b2;"></div>
<div class="abs" style="left:0.00px;top:991.00px;width:1600.00px;height:27.00px;background:#e6e6e6;"></div>
<div class="abs" style="left:0.00px;top:990.00px;width:1579.00px;height:1.00px;background:#9e9e9e;"></div>
<svg class="abs" style="left:27.00px;top:1000.00px" width="6" height="7" viewBox="0 0 6 7"><polygon points="6,0 6,7 0.5,3.5" fill="#c3c3c3"/></svg>
<svg class="abs" style="left:55.00px;top:1000.00px" width="6" height="7" viewBox="0 0 6 7"><polygon points="0,0 0,7 5.5,3.5" fill="#c3c3c3"/></svg>
<div class="abs" style="left:100.00px;top:994.00px;width:1.00px;height:20.00px;background:#ababab;"></div>
<span class="t" style="left:113.20px;top:998px;font-size:12.30px;color:#444;transform-origin:0 0;transform:scaleX(1.0381);">Трэнд</span>
<div class="abs" style="left:162.00px;top:990.00px;width:107.00px;height:25.00px;background:#fff;border-left:1px solid #ababab;border-right:1px solid #ababab;"></div>
<div class="abs" style="left:162.00px;top:1013.00px;width:107.00px;height:2.00px;background:#217346;"></div>
<span class="t" style="left:173.90px;top:998px;font-size:12.30px;color:#217346;font-weight:bold;transform-origin:0 0;transform:scaleX(1.0282);">Смета затрат</span>
<span class="t" style="left:281.50px;top:998px;font-size:12.30px;color:#444;transform-origin:0 0;transform:scaleX(1.0412);">прайс-лист</span>
<div class="abs" style="left:361.00px;top:994.00px;width:1.00px;height:20.00px;background:#ababab;"></div>
<svg class="abs" style="left:394.00px;top:995.00px" width="17" height="17" viewBox="0 0 17 17"><circle cx="8.5" cy="8.5" r="7.5" fill="none" stroke="#777" stroke-width="1.1"/><path d="M8.5,4.5 V12.5 M4.5,8.5 H12.5" stroke="#666" stroke-width="1.4"/></svg>
<div class="abs" style="left:960.00px;top:999.00px;width:2.00px;height:2.00px;background:#a3a3a3;"></div>
<div class="abs" style="left:960.00px;top:1003.00px;width:2.00px;height:2.00px;background:#a3a3a3;"></div>
<div class="abs" style="left:960.00px;top:1007.00px;width:2.00px;height:2.00px;background:#a3a3a3;"></div>
<div class="abs" style="left:977.00px;top:997.00px;width:15.00px;height:15.00px;background:#fff;border:1px solid #ababab;"></div>
<svg class="abs" style="left:982.00px;top:1001.00px" width="4" height="7" viewBox="0 0 4 7"><polygon points="4,0 4,7 0,3.5" fill="#666"/></svg>
<div class="abs" style="left:992.00px;top:997.00px;width:538.00px;height:15.00px;background:#fff;border:1px solid #ababab;"></div>
<div class="abs" style="left:1530.00px;top:997.00px;width:34.00px;height:15.00px;background:#dadada;"></div>
<div class="abs" style="left:1564.00px;top:997.00px;width:15.00px;height:15.00px;background:#fff;border:1px solid #ababab;"></div>
<svg class="abs" style="left:1570.00px;top:1001.00px" width="4" height="7" viewBox="0 0 4 7"><polygon points="0,0 0,7 4,3.5" fill="#666"/></svg>
<div class="abs" style="left:0.00px;top:1018.00px;width:1920.00px;height:22.00px;background:#f1f1f1;"></div>
<div class="abs" style="left:0.00px;top:1018.00px;width:1920.00px;height:1.00px;background:#c6c6c6;"></div>
<span class="t" style="left:7.20px;top:1023px;font-size:12.30px;color:#444;transform-origin:0 0;transform:scaleX(0.9610);">Готово</span>
<div class="abs" style="left:1628.00px;top:1019.00px;width:37.00px;height:21.00px;background:#c6c6c6;"></div>
<svg class="abs" style="left:1640.00px;top:1022.00px" width="13" height="13" viewBox="0 0 13 13"><rect x=".5" y=".5" width="12" height="12" fill="none" stroke="#555"/><path d="M4.5,.5 V12.5 M8.5,.5 V12.5 M.5,4.5 H12.5 M.5,8.5 H12.5" stroke="#555"/></svg>
<svg class="abs" style="left:1678.00px;top:1022.00px" width="14" height="13" viewBox="0 0 14 13"><rect x=".5" y=".5" width="13" height="12" fill="none" stroke="#555"/><rect x="3.5" y="3.5" width="7" height="6" fill="none" stroke="#555"/><path d="M5,5.5 H9 M5,7.5 H9" stroke="#555" stroke-width=".8"/></svg>
<svg class="abs" style="left:1715.00px;top:1022.00px" width="14" height="13" viewBox="0 0 14 13"><rect x=".5" y=".5" width="13" height="12" fill="none" stroke="#555"/><path d="M4.5,.5 V7.5 H9.5 V.5" fill="none" stroke="#555"/></svg>
<div class="abs" style="left:1746.00px;top:1028.00px;width:7.00px;height:1.60px;background:#555;"></div>
<div class="abs" style="left:1757.00px;top:1028.50px;width:99.00px;height:1.00px;background:#a0a0a0;"></div>
<div class="abs" style="left:1804.50px;top:1023.00px;width:3.50px;height:12.00px;background:#666;"></div>
<svg class="abs" style="left:1860.00px;top:1024.50px" width="9" height="9" viewBox="0 0 9 9"><path d="M0,4.5 H9 M4.5,0 V9" stroke="#555" stroke-width="1.6"/></svg>
<span class="t" style="left:1883.60px;top:1024px;font-size:11.40px;color:#444;transform-origin:0 0;transform:scaleX(0.9192);">100%</span>
<div id="taskbar"></div>
<svg class="abs" style="left:15.50px;top:1052.00px" width="17" height="17" viewBox="0 0 17 17"><path d="M0,2.4 L7.3,1.3 V8 H0 Z M8.2,1.2 L17,0 V8 H8.2 Z M0,9 H7.3 V15.7 L0,14.6 Z M8.2,9 H17 V17 L8.2,15.8 Z" fill="#fff"/></svg>
<svg class="abs" style="left:63.00px;top:1051.00px" width="18" height="18" viewBox="0 0 18 18"><circle cx="11" cy="6.5" r="5" fill="none" stroke="#fff" stroke-width="1.5"/><path d="M7.5,10.3 L1,17" stroke="#fff" stroke-width="1.6"/></svg>
<svg class="abs" style="left:111.00px;top:1050.00px" width="23" height="20" viewBox="0 0 23 20"><path d="M1,2 H8 L10,4 H22 V18 H1 Z" fill="#f5b800"/><path d="M1,6 H22 V18 H1 Z" fill="#ffd75e"/><path d="M5,12 H18 V18 H5 Z" fill="#3b8fde"/><path d="M8,15 H15 V18 H8 Z" fill="#ffd75e"/></svg>
<div class="abs" style="left:103.00px;top:1078.00px;width:40.00px;height:2.00px;background:#85c1ee;"></div>
<svg class="abs" style="left:159.50px;top:1048.00px" width="25" height="25" viewBox="0 0 25 25"><rect x=".75" y=".75" width="23.5" height="23.5" fill="#303030" stroke="#0ea5e3" stroke-width="1.5"/><circle cx="12.5" cy="12.5" r="8.5" fill="none" stroke="#0ea5e3" stroke-width="1.3"/><text x="8" y="17.8" font-size="14.5" font-family="Liberation Sans,sans-serif" fill="#0ea5e3">K</text></svg>
<svg class="abs" style="left:208.50px;top:1047.50px" width="25" height="25" viewBox="0 0 25 25"><defs><linearGradient id="eg" x1="0" y1="0" x2=".6" y2="1"><stop offset="0" stop-color="#3cc6f2"/><stop offset=".5" stop-color="#1b8fd8"/><stop offset="1" stop-color="#0b4f9c"/></linearGradient><linearGradient id="eg2" x1="0" y1="0" x2="1" y2="1"><stop offset="0" stop-color="#35c3d8"/><stop offset=".5" stop-color="#4fd680"/><stop offset="1" stop-color="#8fe04a"/></linearGradient></defs><circle cx="12.5" cy="12.5" r="12" fill="url(#eg)"/><path d="M9,1 A12,12 0 0 1 24.5,12.5 C24.5,16.5 21.5,18 18,17.6 C20.5,15.5 20,10 15,8.2 C11.5,7 8,8 5.5,10.5 C5.5,6 7,3 9,1 Z" fill="url(#eg2)"/><path d="M12.5,14.5 C13,11.5 16.5,11 18,13.2 C19,15 18,17 16.2,17.6 C19,19.5 22.5,18.5 24,16 C23,20 20,23 16,24 C12,22.5 11.5,18 12.5,14.5 Z" fill="#1b1b1b"/><path d="M12.5,14.5 C11,18 12.5,22.5 16,24 C12,25 8,23.5 5.5,20.5 Z" fill="#0b4f9c"/><circle cx="6" cy="19" r="5.5" fill="#9a9a9a"/><circle cx="6" cy="17.2" r="2" fill="#dedede"/><path d="M2.4,22.3 A3.7,3.7 0 0 1 9.6,22.3 Z" fill="#dedede"/></svg>
<svg class="abs" style="left:258.00px;top:1048.00px" width="24" height="24" viewBox="0 0 24 24"><rect x=".5" y=".5" width="22.5" height="22.5" fill="#fff" stroke="#a020a0" stroke-width="1"/><text x="2" y="11" font-size="13.5" font-weight="bold" font-family="Liberation Serif,serif" fill="#2a2a8f">A</text><text x="12.5" y="11" font-size="13.5" font-weight="bold" font-family="Liberation Serif,serif" fill="#1e7a1e">B</text><text x="8" y="17.5" font-size="12" font-weight="bold" font-family="Liberation Serif,serif" fill="#e01020">C</text><text x="1" y="22.3" font-size="11" font-weight="bold" font-family="Liberation Serif,serif" fill="#000" textLength="21" lengthAdjust="spacingAndGlyphs">.net</text></svg>
<svg class="abs" style="left:307.00px;top:1048.00px" width="24" height="24" viewBox="0 0 24 24"><rect x="9" y="2.5" width="14" height="19" fill="#fff" stroke="#d24726" stroke-width="1"/><path d="M12,7 H20 M12,16 H20 M12,18.5 H20" stroke="#d24726" stroke-width="1.2"/><circle cx="16" cy="11.2" r="2.6" fill="#d24726"/><path d="M0,2.5 L14,0 V24 L0,21.5 Z" fill="#d24726"/><text x="3.3" y="17" font-size="12.5" font-weight="bold" font-family="Liberation Sans,sans-serif" fill="#fff">P</text></svg>
<div class="abs" style="left:299.00px;top:1078.00px;width:40.00px;height:2.00px;background:#85c1ee;"></div>
<div class="abs" style="left:344.00px;top:1040.00px;width:45.00px;height:40.00px;background:#3d3d3d;"></div>
<div class="abs" style="left:389.00px;top:1040.00px;width:3.00px;height:40.00px;background:#333;"></div>
<svg class="abs" style="left:356.00px;top:1048.00px" width="24" height="24" viewBox="0 0 24 24"><rect x="9" y="2.5" width="14" height="19" fill="#fff" stroke="#1e7145" stroke-width="1"/><path d="M15,5.5 H21 M15,8.5 H21 M15,11.5 H21 M15,14.5 H21 M15,17.5 H21" stroke="#1e7145" stroke-width="1.6"/><path d="M17.6,4 V20" stroke="#fff" stroke-width="1"/><path d="M0,2.5 L14,0 V24 L0,21.5 Z" fill="#1e7145"/><text x="3" y="17" font-size="12.5" font-weight="bold" font-family="Liberation Sans,sans-serif" fill="#fff">X</text></svg>
<div class="abs" style="left:344.00px;top:1078.00px;width:48.00px;height:2.00px;background:#85c1ee;"></div>
<svg class="abs" style="left:405.00px;top:1048.00px" width="24" height="24" viewBox="0 0 24 24"><rect x="9" y="2.5" width="14" height="19" fill="#fff" stroke="#2b579a" stroke-width="1"/><path d="M15,6 H21 M15,9 H21 M15,12 H21 M15,15 H21 M15,18 H21" stroke="#2b579a" stroke-width="1.3"/><path d="M0,2.5 L14,0 V24 L0,21.5 Z" fill="#2b579a"/><text x="1.5" y="17" font-size="12" font-weight="bold" font-family="Liberation Sans,sans-serif" fill="#fff">W</text></svg>
<div class="abs" style="left:397.00px;top:1078.00px;width:40.00px;height:2.00px;background:#85c1ee;"></div>
<svg class="abs" style="left:1723.00px;top:1055.60px" width="12" height="8" viewBox="0 0 12 8"><path d="M.8,7 L6,1.5 L11.2,7" fill="none" stroke="#fff" stroke-width="1.3"/></svg>
<svg class="abs" style="left:1744.00px;top:1053.00px" width="18" height="15" viewBox="0 0 18 15"><rect x="4.3" y="1.6" width="12.2" height="8.8" fill="none" stroke="#fff" stroke-width="1.2"/><rect x=".9" y="1" width="4.5" height="5.6" fill="#fff"/><path d="M2,2.4 H4.3 M2,3.8 L3.15,4.9 L4.3,3.8" fill="none" stroke="#1b1b1b" stroke-width=".8"/><path d="M3.4,6.6 V14 M9.6,10.4 V13.4 M6,13.5 H13" stroke="#fff" stroke-width="1.2" fill="none"/></svg>
<span class="t" style="left:1772.60px;top:1054px;font-size:12.30px;color:#fff;transform-origin:0 0;transform:scaleX(0.8851);">РУС</span>
<span class="t" style="left:1823.40px;top:1045px;font-size:12.00px;color:#fff;transform-origin:0 0;transform:scaleX(0.8863);">9:03</span>
<span class="t" style="left:1806.60px;top:1063px;font-size:12.00px;color:#fff;transform-origin:0 0;transform:scaleX(0.8958);">07.03.2023</span>
<svg class="abs" style="left:1878.00px;top:1051.00px" width="27" height="27" viewBox="0 0 27 27"><path d="M1,1 H17 V14 H12.5 V18 L8.5,14 H1 Z" fill="#fff"/><path d="M4,4.5 H14 M4,7.5 H14 M4,10.5 H10.5" stroke="#1b1b1b" stroke-width="1"/><circle cx="16.4" cy="16.6" r="7.6" fill="#262626" stroke="#9a9a9a" stroke-width="1.1"/><text x="13" y="20.9" font-size="12" font-weight="bold" font-family="Liberation Sans,sans-serif" fill="#fff">4</text></svg>
<div class="abs" style="left:1915.00px;top:1040.00px;width:1.00px;height:40.00px;background:#555;"></div>
</body>
</html>
